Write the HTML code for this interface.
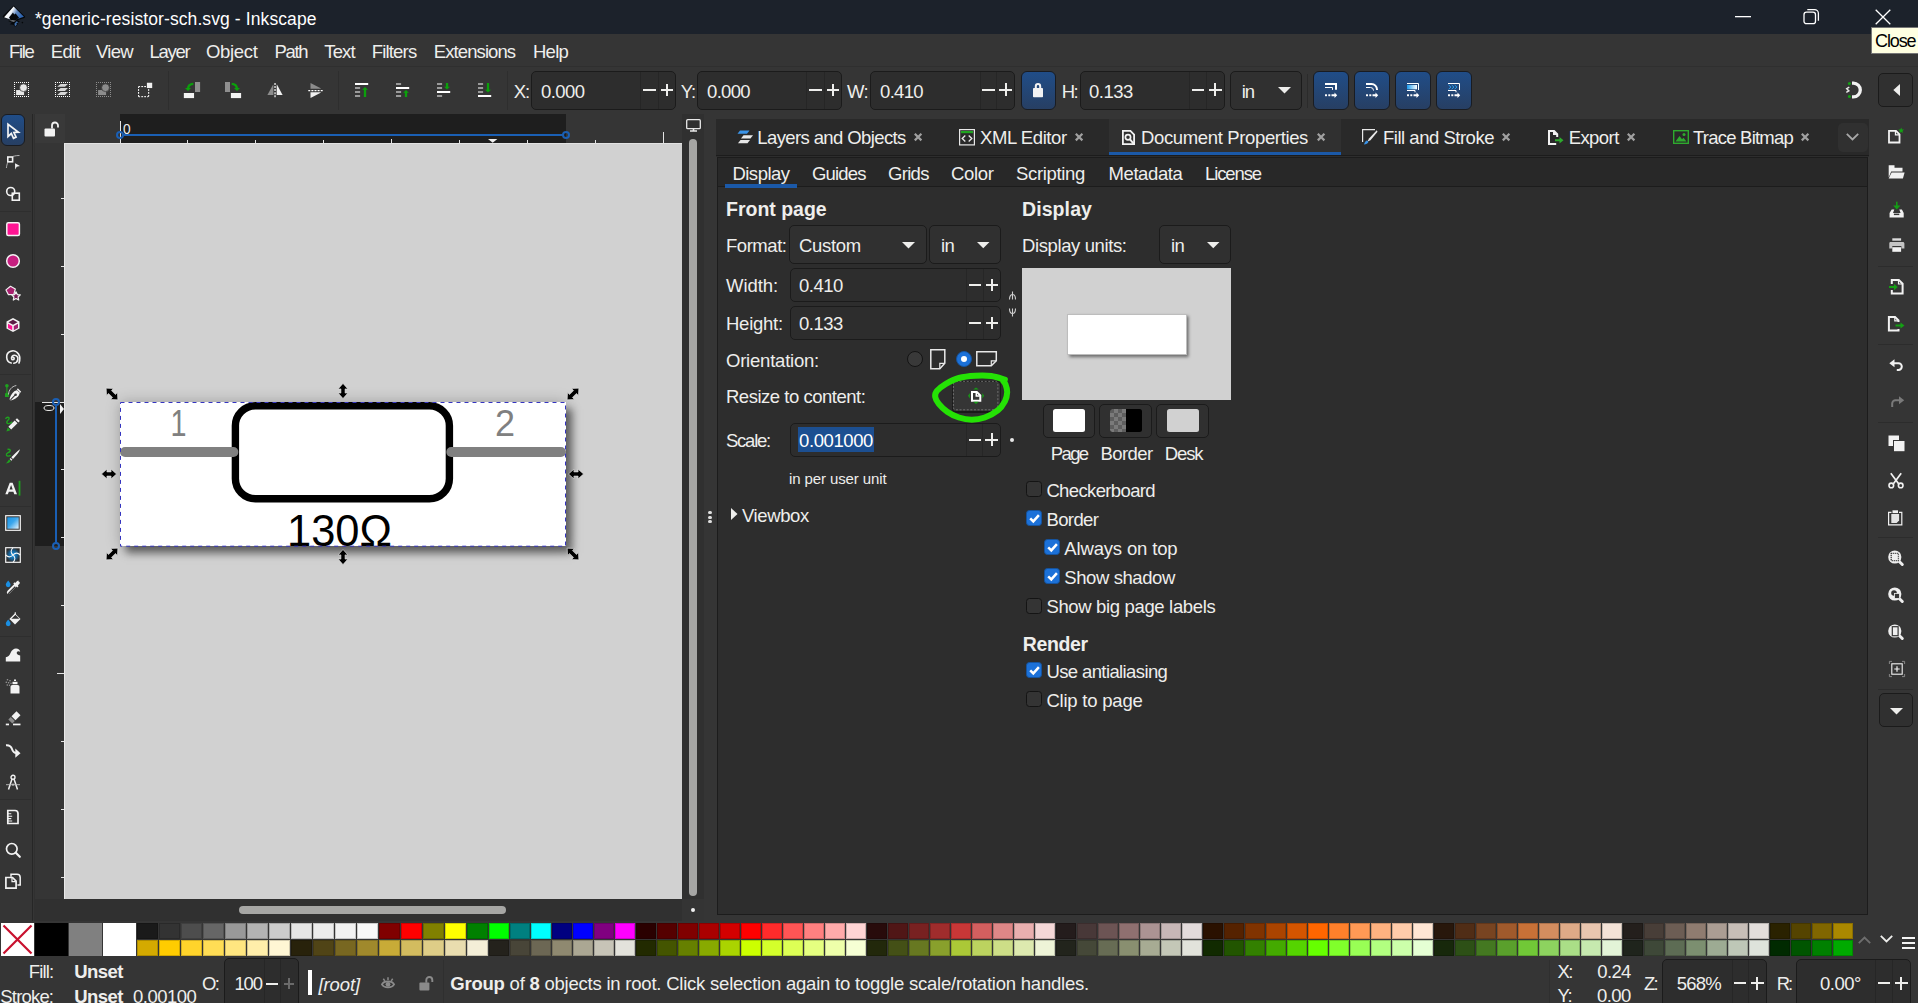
<!DOCTYPE html>
<html lang="en"><head><meta charset="utf-8"><title>*generic-resistor-sch.svg - Inkscape</title>
<style>
html,body{margin:0;padding:0;}
body{width:1918px;height:1003px;overflow:hidden;background:#353535;position:relative;font-family:"Liberation Sans",sans-serif;}
body div,body span.t,body svg{position:absolute;box-sizing:border-box;}
span.t{white-space:pre;}
svg{overflow:visible;}
</style></head><body>
<div style="left:0px;top:0px;width:1918px;height:34px;background:#1c222b;"></div>
<span class="t" style="left:34.90px;top:10.69px;font-size:17.5px;line-height:17.5px;color:#ffffff;letter-spacing:0.098px;">*generic-resistor-sch.svg - Inkscape</span>
<svg style="left:1735px;top:16px;" width="16" height="2" viewBox="0 0 16 2"><rect x="0" y="0" width="16" height="1.3" fill="#fff"/></svg>
<svg style="left:1803px;top:8px;" width="18" height="18" viewBox="0 0 18 18"><rect x="1" y="4.2" width="11.5" height="11.5" rx="2.5" fill="none" stroke="#fff" stroke-width="1.3"/><path d="M4.3 1.6h7.2a3.9 3.9 0 0 1 3.9 3.9v7.2" fill="none" stroke="#fff" stroke-width="1.3"/></svg>
<svg style="left:1875px;top:9px;" width="16" height="16" viewBox="0 0 16 16"><path d="M0.7 0.7L15.3 15.3M15.3 0.7L0.7 15.3" stroke="#fff" stroke-width="1.3" fill="none"/></svg>
<svg style="left:2px;top:4px;" width="25" height="25" viewBox="0 0 25 25"><defs><linearGradient id="lg1" x1="0" y1="0" x2="1" y2="0.350"><stop offset="0" stop-color="#ffffff"/><stop offset="0.450" stop-color="#f4f6fa"/><stop offset="0.700" stop-color="#5f86bd"/><stop offset="1" stop-color="#2f65b0"/></linearGradient></defs><path d="M11.600 1.500L22.800 12.300c.6.700.3 1.300-.5 1.600l-6.800 2.300 2.500 1.300-3 1.300 1 1-2.600 3.200-2.200-2.300-3.500-.5 2.300-1.500-3.800-1.600 2.300-1.400-7-2.200c-.9-.4-1-1-.4-1.700z" fill="#05070a"/><path d="M11.600 2.600l10.300 10.100-7.300 2.600c-1.500-1-4.800-1-6.300.2l-6.200-2.300z" fill="url(#lg1)"/><path d="M11 8.500l1.200 2 1.500-1 3.500 4.500-3 1.500c-1.500-.8-4-.8-5.500.2L7 13.500z" fill="#05070a"/><path d="M7.200 16.700c1.800-.7 5-.7 7 .1l-2.500.9z" fill="#8d9196"/><path d="M14.600 17.300l1.800.9-2 1 .6 1.100-1.900 2.200-.7-2.700z" fill="#3f6eaa"/><circle cx="20.400" cy="18.600" r="0.800" fill="#05070a"/></svg>
<span class="t" style="left:9.00px;top:42.74px;font-size:18.5px;line-height:18.5px;color:#eeeeec;letter-spacing:-1.353px;">File</span>
<span class="t" style="left:50.70px;top:42.74px;font-size:18.5px;line-height:18.5px;color:#eeeeec;letter-spacing:-0.645px;">Edit</span>
<span class="t" style="left:96.00px;top:42.74px;font-size:18.5px;line-height:18.5px;color:#eeeeec;letter-spacing:-0.742px;">View</span>
<span class="t" style="left:149.50px;top:42.74px;font-size:18.5px;line-height:18.5px;color:#eeeeec;letter-spacing:-1.256px;">Layer</span>
<span class="t" style="left:206.00px;top:42.74px;font-size:18.5px;line-height:18.5px;color:#eeeeec;letter-spacing:-0.311px;">Object</span>
<span class="t" style="left:274.60px;top:42.74px;font-size:18.5px;line-height:18.5px;color:#eeeeec;letter-spacing:-1.339px;">Path</span>
<span class="t" style="left:324.30px;top:42.74px;font-size:18.5px;line-height:18.5px;color:#eeeeec;letter-spacing:-0.882px;">Text</span>
<span class="t" style="left:371.70px;top:42.74px;font-size:18.5px;line-height:18.5px;color:#eeeeec;letter-spacing:-0.809px;">Filters</span>
<span class="t" style="left:433.80px;top:42.74px;font-size:18.5px;line-height:18.5px;color:#eeeeec;letter-spacing:-0.910px;">Extensions</span>
<span class="t" style="left:532.90px;top:42.74px;font-size:18.5px;line-height:18.5px;color:#eeeeec;letter-spacing:-0.687px;">Help</span>
<div style="left:0px;top:66px;width:1918px;height:1px;background:#2f2f2f;"></div>
<span class="t" style="left:513.80px;top:82.74px;font-size:18.5px;line-height:18.5px;color:#eeeeec;letter-spacing:-1.190px;">X:</span>
<div style="left:531px;top:71px;width:145px;height:38.5px;background:#2d2d2d;border:1px solid #1b1b1b;border-radius:5px;"></div>
<div style="left:640px;top:72px;width:1px;height:36.5px;background:#262626;"></div>
<div style="left:658px;top:72px;width:1px;height:36.5px;background:#262626;"></div>
<span class="t" style="left:541.00px;top:82.74px;font-size:18.5px;line-height:18.5px;color:#eeeeec;letter-spacing:-0.539px;">0.000</span>
<div style="left:643px;top:88.6px;width:13px;height:2px;background:#eeeeec;"></div>
<div style="left:661px;top:88.6px;width:12px;height:2px;background:#eeeeec;"></div>
<div style="left:666.0px;top:83.6px;width:2px;height:12px;background:#eeeeec;"></div>
<span class="t" style="left:680.70px;top:82.74px;font-size:18.5px;line-height:18.5px;color:#eeeeec;letter-spacing:-1.080px;">Y:</span>
<div style="left:697px;top:71px;width:145px;height:38.5px;background:#2d2d2d;border:1px solid #1b1b1b;border-radius:5px;"></div>
<div style="left:806px;top:72px;width:1px;height:36.5px;background:#262626;"></div>
<div style="left:824px;top:72px;width:1px;height:36.5px;background:#262626;"></div>
<span class="t" style="left:707.00px;top:82.74px;font-size:18.5px;line-height:18.5px;color:#eeeeec;letter-spacing:-0.659px;">0.000</span>
<div style="left:809px;top:88.6px;width:13px;height:2px;background:#eeeeec;"></div>
<div style="left:827px;top:88.6px;width:12px;height:2px;background:#eeeeec;"></div>
<div style="left:832.0px;top:83.6px;width:2px;height:12px;background:#eeeeec;"></div>
<span class="t" style="left:847.00px;top:82.74px;font-size:18.5px;line-height:18.5px;color:#eeeeec;letter-spacing:-0.633px;">W:</span>
<div style="left:870px;top:71px;width:145px;height:38.5px;background:#2d2d2d;border:1px solid #1b1b1b;border-radius:5px;"></div>
<div style="left:980px;top:72px;width:1px;height:36.5px;background:#262626;"></div>
<div style="left:996px;top:72px;width:1px;height:36.5px;background:#262626;"></div>
<span class="t" style="left:880.00px;top:82.74px;font-size:18.5px;line-height:18.5px;color:#eeeeec;letter-spacing:-0.659px;">0.410</span>
<div style="left:982px;top:88.6px;width:13px;height:2px;background:#eeeeec;"></div>
<div style="left:999px;top:88.6px;width:13px;height:2px;background:#eeeeec;"></div>
<div style="left:1004.5px;top:83.1px;width:2px;height:13px;background:#eeeeec;"></div>
<span class="t" style="left:1061.70px;top:82.74px;font-size:18.5px;line-height:18.5px;color:#eeeeec;letter-spacing:-1.600px;">H:</span>
<div style="left:1080px;top:71px;width:145px;height:38.5px;background:#2d2d2d;border:1px solid #1b1b1b;border-radius:5px;"></div>
<div style="left:1189px;top:72px;width:1px;height:36.5px;background:#262626;"></div>
<div style="left:1206px;top:72px;width:1px;height:36.5px;background:#262626;"></div>
<span class="t" style="left:1089.00px;top:82.74px;font-size:18.5px;line-height:18.5px;color:#eeeeec;letter-spacing:-0.519px;">0.133</span>
<div style="left:1191.7px;top:88.6px;width:12.299999999999955px;height:2px;background:#eeeeec;"></div>
<div style="left:1209px;top:88.6px;width:12.700000000000045px;height:2px;background:#eeeeec;"></div>
<div style="left:1214.3px;top:83.2px;width:2px;height:12.700000000000045px;background:#eeeeec;"></div>
<div style="left:1020.5px;top:71px;width:35px;height:38.5px;background:linear-gradient(#204d88,#273f63);border:1px solid #191c22;border-radius:6px;"></div>
<svg style="left:1033px;top:82px;" width="10" height="16" viewBox="0 0 10 16"><path d="M2.800 7V4.200a2.200 2.200 0 0 1 4.400 0V7" fill="none" stroke="#f2f2f2" stroke-width="2"/><rect x="0" y="6" width="10" height="9.300" rx="0.800" fill="#f2f2f2"/></svg>
<div style="left:1230px;top:71px;width:71.7px;height:38.5px;background:#303030;border:1px solid #1b1b1b;border-radius:5px;"></div>
<span class="t" style="left:1241.70px;top:82.74px;font-size:18.5px;line-height:18.5px;color:#eeeeec;letter-spacing:-1.050px;">in</span>
<svg style="left:1278px;top:87px;" width="13" height="7" viewBox="0 0 13 7"><path d="M0 0h13l-6.500 6.500z" fill="#eeeeec"/></svg>
<div style="left:1307px;top:74px;width:1px;height:34px;background:#2b2b2b;"></div>
<div style="left:1313.2px;top:71px;width:35.4px;height:38.5px;background:linear-gradient(#204d88,#273f63);border:1px solid #191c22;border-radius:6px;"></div>
<div style="left:1354.2px;top:71px;width:35.4px;height:38.5px;background:linear-gradient(#204d88,#273f63);border:1px solid #191c22;border-radius:6px;"></div>
<div style="left:1395.2px;top:71px;width:35.4px;height:38.5px;background:linear-gradient(#204d88,#273f63);border:1px solid #191c22;border-radius:6px;"></div>
<div style="left:1436.2px;top:71px;width:35.4px;height:38.5px;background:linear-gradient(#204d88,#273f63);border:1px solid #191c22;border-radius:6px;"></div>
<div style="left:1878px;top:73px;width:35px;height:34px;background:#303030;border:1px solid #1b1b1b;border-radius:5px;"></div>
<svg style="left:1892.5px;top:84px;" width="7" height="12" viewBox="0 0 7 12"><path d="M7 0v12l-6.700-6z" fill="#eeeeec"/></svg>
<div style="left:1871px;top:27px;width:47px;height:27px;background:#ffffe1;border:1px solid #767676;border-right:none;"></div>
<span class="t" style="left:1875.00px;top:32.26px;font-size:18px;line-height:18px;color:#000;letter-spacing:-1.104px;">Close</span>
<div style="left:32px;top:114px;width:1.4px;height:807px;background:#262626;"></div>
<div style="left:1px;top:114px;width:23.5px;height:31.5px;background:linear-gradient(#204d88,#273f63);border:1px solid #191c22;border-radius:6px;"></div>
<div style="left:33.5px;top:114px;width:670.5px;height:807px;background:#303030;"></div>
<div style="left:35px;top:114px;width:647px;height:29px;background:#353535;"></div>
<div style="left:120px;top:114px;width:446px;height:29px;background:#1e1e1e;"></div>
<div style="left:35px;top:143px;width:29px;height:756px;background:#353535;"></div>
<div style="left:35px;top:402px;width:29px;height:144px;background:#1e1e1e;"></div>
<div style="left:35px;top:114px;width:29.5px;height:29px;background:#393939;"></div>
<div style="left:64px;top:143px;width:618px;height:756px;background:#d1d1d1;border-left:1px solid #e9e9e9;border-top:1px solid #e2e2e2;"></div>
<div style="left:689px;top:139px;width:8.2px;height:757px;background:#a6a6a4;border-radius:4px;"></div>
<div style="left:682px;top:899px;width:22px;height:22px;background:#343434;"></div>
<div style="left:239px;top:906px;width:266.5px;height:8px;background:#a6a6a4;border-radius:4px;"></div>
<div style="left:690.8px;top:907.8px;width:4.4px;height:4.4px;background:#f0f0f0;border-radius:50%;"></div>
<div style="left:704px;top:114px;width:13px;height:802px;background:#353535;"></div>
<div style="left:716px;top:119px;width:1153px;height:38px;background:#2d2d2d;"></div>
<div style="left:716px;top:119px;width:1153px;height:36px;background:#292929;"></div>
<div style="left:1109px;top:119px;width:232px;height:36px;background:#303030;"></div>
<div style="left:1109px;top:152px;width:232px;height:4px;background:#1b59a8;"></div>
<div style="left:716px;top:155px;width:1153px;height:1px;background:#1c1c1c;"></div>
<div style="left:717px;top:157px;width:1151.3px;height:758px;background:#2d2d2d;border:1px solid #1c1c1c;"></div>
<div style="left:718px;top:158px;width:1149.3px;height:28px;background:#282828;"></div>
<span class="t" style="left:757.30px;top:129.34px;font-size:18.5px;line-height:18.5px;color:#eeeeec;letter-spacing:-0.611px;">Layers and Objects</span>
<svg style="left:913.9px;top:133.39999999999998px;" width="8.200000000000045" height="8.200000000000045" viewBox="0 0 8.200000000000045 8.200000000000045"><path d="M0.800 0.800L7.4 7.4M7.4 0.800L0.800 7.4" stroke="#a0a0a0" stroke-width="2.200" fill="none"/></svg>
<span class="t" style="left:980.00px;top:129.34px;font-size:18.5px;line-height:18.5px;color:#eeeeec;letter-spacing:-0.412px;">XML Editor</span>
<svg style="left:1074.7px;top:133.4000000000001px;" width="8.199999999999818" height="8.199999999999818" viewBox="0 0 8.199999999999818 8.199999999999818"><path d="M0.800 0.800L7.4 7.4M7.4 0.800L0.800 7.4" stroke="#a0a0a0" stroke-width="2.200" fill="none"/></svg>
<span class="t" style="left:1141.00px;top:129.34px;font-size:18.5px;line-height:18.5px;color:#eeeeec;letter-spacing:-0.357px;">Document Properties</span>
<svg style="left:1316.9px;top:133.4000000000001px;" width="8.199999999999818" height="8.199999999999818" viewBox="0 0 8.199999999999818 8.199999999999818"><path d="M0.800 0.800L7.4 7.4M7.4 0.800L0.800 7.4" stroke="#a0a0a0" stroke-width="2.200" fill="none"/></svg>
<span class="t" style="left:1383.00px;top:129.34px;font-size:18.5px;line-height:18.5px;color:#eeeeec;letter-spacing:-0.483px;">Fill and Stroke</span>
<svg style="left:1501.7px;top:133.4000000000001px;" width="8.199999999999818" height="8.199999999999818" viewBox="0 0 8.199999999999818 8.199999999999818"><path d="M0.800 0.800L7.4 7.4M7.4 0.800L0.800 7.4" stroke="#a0a0a0" stroke-width="2.200" fill="none"/></svg>
<span class="t" style="left:1568.70px;top:129.34px;font-size:18.5px;line-height:18.5px;color:#eeeeec;letter-spacing:-0.578px;">Export</span>
<svg style="left:1626.6000000000001px;top:133.4000000000001px;" width="8.199999999999818" height="8.199999999999818" viewBox="0 0 8.199999999999818 8.199999999999818"><path d="M0.800 0.800L7.4 7.4M7.4 0.800L0.800 7.4" stroke="#a0a0a0" stroke-width="2.200" fill="none"/></svg>
<span class="t" style="left:1693.00px;top:129.34px;font-size:18.5px;line-height:18.5px;color:#eeeeec;letter-spacing:-0.777px;">Trace Bitmap</span>
<svg style="left:1801.4px;top:133.4000000000001px;" width="8.199999999999818" height="8.199999999999818" viewBox="0 0 8.199999999999818 8.199999999999818"><path d="M0.800 0.800L7.4 7.4M7.4 0.800L0.800 7.4" stroke="#a0a0a0" stroke-width="2.200" fill="none"/></svg>
<div style="left:1838px;top:122.5px;width:30px;height:29.5px;background:#303030;border-radius:5px;"></div>
<svg style="left:1846px;top:133px;" width="13" height="8" viewBox="0 0 13 8"><path d="M0.800 0.800L6.500 6.500L12.200 0.800" stroke="#a8a8a8" stroke-width="1.800" fill="none"/></svg>
<svg style="left:737px;top:129px;" width="17" height="17" viewBox="0 0 17 17"><path d="M3 1.500h9.500l-2.500 3.200H0.500z" fill="#3b94e8"/><path d="M6.500 6.200h9.500l-2.500 3.200H4z" fill="#e8e8e8"/><path d="M3.500 11h9.500l-2.500 3.200H1z" fill="#e8e8e8"/></svg>
<svg style="left:959px;top:129px;" width="16" height="17" viewBox="0 0 16 17"><rect x="0.600" y="0.600" width="14.800" height="15.300" fill="none" stroke="#e8e8e8" stroke-width="1.200"/><rect x="2" y="2" width="12" height="2.200" fill="#1fa31f"/><path d="M6.300 6.500L3.200 9.500l3.100 3M9.700 6.500l3.100 3-3.100 3" fill="none" stroke="#e8e8e8" stroke-width="1.300"/></svg>
<svg style="left:1122px;top:130px;" width="13" height="15" viewBox="0 0 13 15"><path d="M0.900 0.900h7.500l3.700 3.700v9.500h-11.200z" fill="none" stroke="#f2f2f2" stroke-width="1.800"/><circle cx="6" cy="7.200" r="2.600" fill="none" stroke="#f2f2f2" stroke-width="1.700"/><path d="M7.800 9.200l4 4.600" stroke="#f2f2f2" stroke-width="2"/></svg>
<svg style="left:1362px;top:129px;" width="16" height="17" viewBox="0 0 16 17"><path d="M0.600 13V0.600h12.400" fill="none" stroke="#e8e8e8" stroke-width="1.200"/><path d="M14.800 1.200L7 9.500l-1.500 3 3-1.300 7-8.500z" fill="#e8e8e8"/><path d="M5.200 11.500c-1.500.2-2.600 1.600-3.200 4 2 0 3.800-.8 4.500-2.700z" fill="#3b94e8"/></svg>
<svg style="left:1547px;top:129px;" width="17" height="17" viewBox="0 0 17 17"><path d="M1 1h6.500l3.700 3.700V8h-2V6H6V3H3v11h6.200v2H1z" fill="#f2f2f2"/><path d="M8 10.200h4.500V8l4 3.200-4 3.200v-2.200H8z" fill="#2eaa2e"/></svg>
<svg style="left:1673px;top:130px;" width="16" height="14" viewBox="0 0 16 14"><rect x="0.700" y="0.700" width="14.600" height="12.600" fill="none" stroke="#2eaa2e" stroke-width="1.400"/><path d="M2.500 11.500l4-5.500 2.500 3.200 1.500-1.500 3 3.800z" fill="#2eaa2e"/><circle cx="11" cy="4.500" r="1.500" fill="#2eaa2e"/></svg>
<span class="t" style="left:732.40px;top:164.84px;font-size:18.5px;line-height:18.5px;color:#eeeeec;letter-spacing:-0.494px;">Display</span>
<span class="t" style="left:812.00px;top:164.84px;font-size:18.5px;line-height:18.5px;color:#eeeeec;letter-spacing:-0.836px;">Guides</span>
<span class="t" style="left:888.00px;top:164.84px;font-size:18.5px;line-height:18.5px;color:#eeeeec;letter-spacing:-0.700px;">Grids</span>
<span class="t" style="left:951.00px;top:164.84px;font-size:18.5px;line-height:18.5px;color:#eeeeec;letter-spacing:-0.322px;">Color</span>
<span class="t" style="left:1016.00px;top:164.84px;font-size:18.5px;line-height:18.5px;color:#eeeeec;letter-spacing:-0.331px;">Scripting</span>
<span class="t" style="left:1108.50px;top:164.84px;font-size:18.5px;line-height:18.5px;color:#eeeeec;letter-spacing:-0.405px;">Metadata</span>
<span class="t" style="left:1205.00px;top:164.84px;font-size:18.5px;line-height:18.5px;color:#eeeeec;letter-spacing:-1.110px;">License</span>
<div style="left:718px;top:186px;width:1149.3px;height:1px;background:#1c1c1c;"></div>
<div style="left:725px;top:183.5px;width:72px;height:4px;background:#1b59a8;"></div>
<span class="t" style="left:726.00px;top:200.09px;font-size:19.5px;line-height:19.5px;color:#eeeeec;letter-spacing:-0.005px;font-weight:bold;">Front page</span>
<span class="t" style="left:1022.00px;top:200.09px;font-size:19.5px;line-height:19.5px;color:#eeeeec;letter-spacing:0.091px;font-weight:bold;">Display</span>
<span class="t" style="left:726.00px;top:236.64px;font-size:18.5px;line-height:18.5px;color:#eeeeec;letter-spacing:-0.462px;">Format:</span>
<div style="left:789.3px;top:225.3px;width:137.7px;height:38.4px;background:#303030;border:1px solid #1b1b1b;border-radius:5px;"></div>
<span class="t" style="left:799.00px;top:237.24px;font-size:18.5px;line-height:18.5px;color:#eeeeec;letter-spacing:-0.340px;">Custom</span>
<svg style="left:902px;top:241.9px;" width="13" height="6.5" viewBox="0 0 13 6.5"><path d="M0 0h13l-6.5 6.5z" fill="#eeeeec"/></svg>
<div style="left:929.3px;top:225.3px;width:71.7px;height:38.4px;background:#303030;border:1px solid #1b1b1b;border-radius:5px;"></div>
<span class="t" style="left:941.00px;top:237.24px;font-size:18.5px;line-height:18.5px;color:#eeeeec;letter-spacing:-0.700px;">in</span>
<svg style="left:977px;top:241.9px;" width="12.5" height="6.25" viewBox="0 0 12.5 6.25"><path d="M0 0h12.5l-6.25 6.25z" fill="#eeeeec"/></svg>
<span class="t" style="left:1022.00px;top:237.24px;font-size:18.5px;line-height:18.5px;color:#eeeeec;letter-spacing:-0.394px;">Display units:</span>
<div style="left:1159.3px;top:225.3px;width:71.7px;height:38.4px;background:#303030;border:1px solid #1b1b1b;border-radius:5px;"></div>
<span class="t" style="left:1171.00px;top:237.24px;font-size:18.5px;line-height:18.5px;color:#eeeeec;letter-spacing:-0.700px;">in</span>
<svg style="left:1207px;top:241.9px;" width="12.5" height="6.25" viewBox="0 0 12.5 6.25"><path d="M0 0h12.5l-6.25 6.25z" fill="#eeeeec"/></svg>
<span class="t" style="left:726.00px;top:276.64px;font-size:18.5px;line-height:18.5px;color:#eeeeec;letter-spacing:-0.071px;">Width:</span>
<div style="left:790px;top:267.7px;width:211px;height:34.10000000000002px;background:#2d2d2d;border:1px solid #1b1b1b;border-radius:5px;"></div>
<div style="left:966px;top:268.7px;width:1px;height:32.10000000000002px;background:#262626;"></div>
<div style="left:983px;top:268.7px;width:1px;height:32.10000000000002px;background:#262626;"></div>
<span class="t" style="left:799.00px;top:276.64px;font-size:18.5px;line-height:18.5px;color:#eeeeec;letter-spacing:-0.499px;">0.410</span>
<div style="left:969px;top:283.8px;width:11.600000000000023px;height:2px;background:#eeeeec;"></div>
<div style="left:986px;top:283.8px;width:12px;height:2px;background:#eeeeec;"></div>
<div style="left:991.0px;top:278.8px;width:2px;height:12px;background:#eeeeec;"></div>
<span class="t" style="left:726.00px;top:314.64px;font-size:18.5px;line-height:18.5px;color:#eeeeec;letter-spacing:-0.260px;">Height:</span>
<div style="left:790px;top:306px;width:211px;height:34px;background:#2d2d2d;border:1px solid #1b1b1b;border-radius:5px;"></div>
<div style="left:966px;top:307px;width:1px;height:32px;background:#262626;"></div>
<div style="left:983px;top:307px;width:1px;height:32px;background:#262626;"></div>
<span class="t" style="left:799.00px;top:314.64px;font-size:18.5px;line-height:18.5px;color:#eeeeec;letter-spacing:-0.499px;">0.133</span>
<div style="left:969px;top:321.8px;width:11.600000000000023px;height:2px;background:#eeeeec;"></div>
<div style="left:986px;top:321.8px;width:12px;height:2px;background:#eeeeec;"></div>
<div style="left:991.0px;top:316.8px;width:2px;height:12px;background:#eeeeec;"></div>
<span class="t" style="left:726.00px;top:352.34px;font-size:18.5px;line-height:18.5px;color:#eeeeec;letter-spacing:-0.220px;">Orientation:</span>
<span class="t" style="left:726.00px;top:388.34px;font-size:18.5px;line-height:18.5px;color:#eeeeec;letter-spacing:-0.488px;">Resize to content:</span>
<span class="t" style="left:726.00px;top:432.34px;font-size:18.5px;line-height:18.5px;color:#eeeeec;letter-spacing:-1.236px;">Scale:</span>
<div style="left:789.5px;top:423px;width:211.5px;height:33.69999999999999px;background:#2d2d2d;border:1px solid #1b1b1b;border-radius:5px;"></div>
<div style="left:966px;top:424px;width:1px;height:31.69999999999999px;background:#262626;"></div>
<div style="left:982px;top:424px;width:1px;height:31.69999999999999px;background:#262626;"></div>
<span class="t" style="left:799.00px;top:431.34px;font-size:18.5px;line-height:18.5px;color:#eeeeec;letter-spacing:74.000px;"></span>
<div style="left:968.5px;top:438.5px;width:12.5px;height:2px;background:#eeeeec;"></div>
<div style="left:985px;top:438.5px;width:13px;height:2px;background:#eeeeec;"></div>
<div style="left:990.5px;top:433.0px;width:2px;height:13px;background:#eeeeec;"></div>
<div style="left:798px;top:427.4px;width:76px;height:24.4px;background:#1c4f91;"></div>
<span class="t" style="left:799.00px;top:432.34px;font-size:18.5px;line-height:18.5px;color:#ffffff;letter-spacing:-0.395px;">0.001000</span>
<div style="left:1010.3px;top:438px;width:4px;height:4px;background:#e8e8e8;border-radius:50%;"></div>
<span class="t" style="left:789.00px;top:471.30px;font-size:15px;line-height:15px;color:#eeeeec;letter-spacing:-0.101px;">in per user unit</span>
<div style="left:708.4px;top:511px;width:3.2px;height:3.2px;background:#e0e0e0;border-radius:50%;"></div>
<div style="left:708.4px;top:515.5px;width:3.2px;height:3.2px;background:#e0e0e0;border-radius:50%;"></div>
<div style="left:708.4px;top:520px;width:3.2px;height:3.2px;background:#e0e0e0;border-radius:50%;"></div>
<svg style="left:730.5px;top:508px;" width="7" height="12" viewBox="0 0 7 12"><path d="M0 0l6.500 6L0 12z" fill="#eeeeec"/></svg>
<span class="t" style="left:742.00px;top:507.14px;font-size:18.5px;line-height:18.5px;color:#eeeeec;letter-spacing:-0.399px;">Viewbox</span>
<svg style="left:1008px;top:291px;" width="9" height="26" viewBox="0 0 9 26"><path d="M4.500 0.500v8M1.500 8.500c0-3.500 1.500-5 3-5s3 1.500 3 5" fill="none" stroke="#cfcfcf" stroke-width="1.100"/><path d="M4.500 25.500v-8M1.500 17.500c0 3.500 1.500 5 3 5s3-1.500 3-5" fill="none" stroke="#cfcfcf" stroke-width="1.100"/></svg>
<div style="left:907px;top:351px;width:16px;height:16px;background:#393939;border:1px solid #141414;border-radius:50%;"></div>
<div style="left:956px;top:351px;width:16px;height:16px;background:#1c71d8;border:1px solid #15539e;border-radius:50%;"></div>
<div style="left:960.7px;top:355.7px;width:6.6px;height:6.6px;background:#ffffff;border-radius:50%;"></div>
<svg style="left:929.5px;top:349px;" width="16" height="21" viewBox="0 0 16 21"><path d="M0.800 0.800h14v13.500l-5 5.500h-9z" fill="none" stroke="#e8e8e8" stroke-width="1.500"/><path d="M14.800 14.300h-5v5.500" fill="none" stroke="#e8e8e8" stroke-width="1.200"/></svg>
<svg style="left:976px;top:351px;" width="21" height="16" viewBox="0 0 21 16"><path d="M0.800 0.800h19.500v9l-5 5h-14.500z" fill="none" stroke="#e8e8e8" stroke-width="1.500"/><path d="M20.300 9.800h-5v5" fill="none" stroke="#e8e8e8" stroke-width="1.200"/></svg>
<div style="left:952px;top:380.5px;width:48.7px;height:32px;background:#353535;border:1px solid #1b1b1b;border-bottom:2px solid #191919;border-radius:4px;"></div>
<svg style="left:953.4px;top:381.2px;" width="45.3" height="29.2" viewBox="0 0 45.3 29.2"><rect x="0.400" y="0.400" width="44.500" height="28.400" rx="2.500" fill="none" stroke="#909090" stroke-width="0.650" stroke-dasharray="2 1.600"/></svg>
<svg style="left:970.9px;top:390.6px;" width="10.3" height="10.7" viewBox="0 0 10.3 10.7"><path d="M1 1h4.800l3.500 3.500V9.700H1z" fill="none" stroke="#ffffff" stroke-width="2"/><path d="M5.300 1.500v3.500h3.500" fill="none" stroke="#ffffff" stroke-width="1.500"/></svg>
<svg style="left:967px;top:387px;" width="18" height="18" viewBox="0 0 18 18"><path d="M9 0.400l2.800 2.200h-5.600zM9 17l2.800-2.200h-5.600zM1 8.700l1.900-2.800v5.600zM17.200 8.700l-1.900-2.800v5.600z" fill="#179a17"/></svg>
<svg style="left:928px;top:370px;" width="86" height="56" viewBox="0 0 86 56"><path d="M76.9 9.6C74.6 9.0 68.3 6.7 63.3 6.0C58.3 5.3 52.5 5.4 47.1 5.7C41.7 6.0 35.8 6.6 30.9 8.0C26.0 9.3 21.6 11.7 17.9 13.8C14.2 16.0 10.7 18.7 8.9 20.9C7.1 23.1 6.9 24.6 7.2 26.8C7.5 29.0 8.8 31.4 10.8 33.9C12.8 36.4 15.8 39.4 19.2 41.7C22.5 44.0 26.8 46.1 30.9 47.5C35.0 48.9 39.5 49.8 43.8 49.8C48.1 49.8 52.5 49.1 56.8 47.5C61.1 45.9 66.4 43.1 69.8 40.4C73.2 37.7 75.3 34.3 76.9 31.3C78.5 28.3 79.1 25.0 79.2 22.2C79.3 19.4 78.2 16.2 77.5 14.4C76.8 12.6 75.7 11.7 75.3 11.2" fill="none" stroke="#25e205" stroke-width="6" stroke-linecap="round" stroke-linejoin="round"/></svg>
<div style="left:1022px;top:268px;width:209px;height:132px;background:#d1d1d1;"></div>
<div style="left:1066.5px;top:314px;width:120.5px;height:40.5px;background:#ffffff;box-shadow:1.500px 2px 3px rgba(0,0,0,.5);border:1px solid #bdbdbd;"></div>
<div style="left:1042.8px;top:404.3px;width:51.9px;height:33.4px;background:#303030;border:1px solid #1b1b1b;border-radius:5px;"></div>
<div style="left:1099.3px;top:404.3px;width:52.4px;height:33.4px;background:#303030;border:1px solid #1b1b1b;border-radius:5px;"></div>
<div style="left:1156.3px;top:404.3px;width:52.4px;height:33.4px;background:#303030;border:1px solid #1b1b1b;border-radius:5px;"></div>
<div style="left:1052.8px;top:409.2px;width:32.4px;height:22.8px;background:#ffffff;border-radius:2.500px;"></div>
<div style="left:1110px;top:409.2px;width:32px;height:22.8px;background:#000000;border-radius:2.500px;"></div>
<div style="left:1110px;top:409.2px;width:16px;height:22.8px;background:#6e6e6e;border-radius:2.500px 0 0 2.500px;background:repeating-conic-gradient(#7a7a7a 0% 25%, #5e5e5e 0% 50%) 0 0/8px 8px;"></div>
<div style="left:1166.6px;top:409.2px;width:32.4px;height:22.8px;background:#d1d1d1;border-radius:2.500px;"></div>
<span class="t" style="left:1050.70px;top:445.04px;font-size:18.5px;line-height:18.5px;color:#eeeeec;letter-spacing:-1.577px;">Page</span>
<span class="t" style="left:1100.60px;top:445.04px;font-size:18.5px;line-height:18.5px;color:#eeeeec;letter-spacing:-0.588px;">Border</span>
<span class="t" style="left:1164.80px;top:445.04px;font-size:18.5px;line-height:18.5px;color:#eeeeec;letter-spacing:-1.112px;">Desk</span>
<div style="left:1026px;top:480.5px;width:16px;height:16px;background:#343434;border:1px solid #141414;border-radius:3.500px;"></div>
<span class="t" style="left:1046.40px;top:481.74px;font-size:18.5px;line-height:18.5px;color:#eeeeec;letter-spacing:-0.634px;">Checkerboard</span>
<div style="left:1026px;top:510.0px;width:16px;height:16px;background:#1c71d8;border:1px solid #15539e;border-radius:3.500px;"></div>
<svg style="left:1028.5px;top:513.5px;" width="11" height="9" viewBox="0 0 11 9"><path d="M1.200 4.300l3.100 3.100 5.600-6.200" fill="none" stroke="#fff" stroke-width="2.500"/></svg>
<span class="t" style="left:1046.40px;top:511.34px;font-size:18.5px;line-height:18.5px;color:#eeeeec;letter-spacing:-0.588px;">Border</span>
<div style="left:1044px;top:539.3px;width:16px;height:16px;background:#1c71d8;border:1px solid #15539e;border-radius:3.500px;"></div>
<svg style="left:1046.5px;top:542.8px;" width="11" height="9" viewBox="0 0 11 9"><path d="M1.200 4.300l3.100 3.100 5.600-6.200" fill="none" stroke="#fff" stroke-width="2.500"/></svg>
<span class="t" style="left:1064.30px;top:539.94px;font-size:18.5px;line-height:18.5px;color:#eeeeec;letter-spacing:-0.160px;">Always on top</span>
<div style="left:1044px;top:568.0px;width:16px;height:16px;background:#1c71d8;border:1px solid #15539e;border-radius:3.500px;"></div>
<svg style="left:1046.5px;top:571.5px;" width="11" height="9" viewBox="0 0 11 9"><path d="M1.200 4.300l3.100 3.100 5.600-6.200" fill="none" stroke="#fff" stroke-width="2.500"/></svg>
<span class="t" style="left:1064.30px;top:568.64px;font-size:18.5px;line-height:18.5px;color:#eeeeec;letter-spacing:-0.417px;">Show shadow</span>
<div style="left:1026px;top:597.5px;width:16px;height:16px;background:#343434;border:1px solid #141414;border-radius:3.500px;"></div>
<span class="t" style="left:1046.40px;top:597.74px;font-size:18.5px;line-height:18.5px;color:#eeeeec;letter-spacing:-0.344px;">Show big page labels</span>
<span class="t" style="left:1022.70px;top:635.49px;font-size:19.5px;line-height:19.5px;color:#eeeeec;letter-spacing:-0.364px;font-weight:bold;">Render</span>
<div style="left:1026px;top:662.0px;width:16px;height:16px;background:#1c71d8;border:1px solid #15539e;border-radius:3.500px;"></div>
<svg style="left:1028.5px;top:665.5px;" width="11" height="9" viewBox="0 0 11 9"><path d="M1.200 4.300l3.100 3.100 5.600-6.200" fill="none" stroke="#fff" stroke-width="2.500"/></svg>
<span class="t" style="left:1046.40px;top:663.04px;font-size:18.5px;line-height:18.5px;color:#eeeeec;letter-spacing:-0.607px;">Use antialiasing</span>
<div style="left:1026px;top:690.5px;width:16px;height:16px;background:#343434;border:1px solid #141414;border-radius:3.500px;"></div>
<span class="t" style="left:1046.40px;top:691.74px;font-size:18.5px;line-height:18.5px;color:#eeeeec;letter-spacing:-0.211px;">Clip to page</span>
<div style="left:137px;top:923px;width:21px;height:16px;background:#1a1a1a;box-shadow:inset 0 0 0 1px rgba(0,0,0,.18);"></div>
<div style="left:159px;top:923px;width:21px;height:16px;background:#333333;box-shadow:inset 0 0 0 1px rgba(0,0,0,.18);"></div>
<div style="left:181px;top:923px;width:21px;height:16px;background:#4d4d4d;box-shadow:inset 0 0 0 1px rgba(0,0,0,.18);"></div>
<div style="left:203px;top:923px;width:21px;height:16px;background:#666666;box-shadow:inset 0 0 0 1px rgba(0,0,0,.18);"></div>
<div style="left:225px;top:923px;width:21px;height:16px;background:#999999;box-shadow:inset 0 0 0 1px rgba(0,0,0,.18);"></div>
<div style="left:247px;top:923px;width:21px;height:16px;background:#b3b3b3;box-shadow:inset 0 0 0 1px rgba(0,0,0,.18);"></div>
<div style="left:269px;top:923px;width:21px;height:16px;background:#cccccc;box-shadow:inset 0 0 0 1px rgba(0,0,0,.18);"></div>
<div style="left:291px;top:923px;width:21px;height:16px;background:#e6e6e6;box-shadow:inset 0 0 0 1px rgba(0,0,0,.18);"></div>
<div style="left:313px;top:923px;width:21px;height:16px;background:#ececec;box-shadow:inset 0 0 0 1px rgba(0,0,0,.18);"></div>
<div style="left:335px;top:923px;width:21px;height:16px;background:#f2f2f2;box-shadow:inset 0 0 0 1px rgba(0,0,0,.18);"></div>
<div style="left:357px;top:923px;width:21px;height:16px;background:#f9f9f9;box-shadow:inset 0 0 0 1px rgba(0,0,0,.18);"></div>
<div style="left:379px;top:923px;width:21px;height:16px;background:#800000;box-shadow:inset 0 0 0 1px rgba(0,0,0,.18);"></div>
<div style="left:401px;top:923px;width:21px;height:16px;background:#ff0000;box-shadow:inset 0 0 0 1px rgba(0,0,0,.18);"></div>
<div style="left:423px;top:923px;width:21px;height:16px;background:#808000;box-shadow:inset 0 0 0 1px rgba(0,0,0,.18);"></div>
<div style="left:445px;top:923px;width:21px;height:16px;background:#ffff00;box-shadow:inset 0 0 0 1px rgba(0,0,0,.18);"></div>
<div style="left:467px;top:923px;width:21px;height:16px;background:#008000;box-shadow:inset 0 0 0 1px rgba(0,0,0,.18);"></div>
<div style="left:489px;top:923px;width:20px;height:16px;background:#00ff00;box-shadow:inset 0 0 0 1px rgba(0,0,0,.18);"></div>
<div style="left:510px;top:923px;width:20px;height:16px;background:#008080;box-shadow:inset 0 0 0 1px rgba(0,0,0,.18);"></div>
<div style="left:531px;top:923px;width:20px;height:16px;background:#00ffff;box-shadow:inset 0 0 0 1px rgba(0,0,0,.18);"></div>
<div style="left:552px;top:923px;width:20px;height:16px;background:#000080;box-shadow:inset 0 0 0 1px rgba(0,0,0,.18);"></div>
<div style="left:573px;top:923px;width:20px;height:16px;background:#0000ff;box-shadow:inset 0 0 0 1px rgba(0,0,0,.18);"></div>
<div style="left:594px;top:923px;width:20px;height:16px;background:#800080;box-shadow:inset 0 0 0 1px rgba(0,0,0,.18);"></div>
<div style="left:615px;top:923px;width:20px;height:16px;background:#ff00ff;box-shadow:inset 0 0 0 1px rgba(0,0,0,.18);"></div>
<div style="left:636px;top:923px;width:20px;height:16px;background:#2a0000;box-shadow:inset 0 0 0 1px rgba(0,0,0,.18);"></div>
<div style="left:657px;top:923px;width:20px;height:16px;background:#550000;box-shadow:inset 0 0 0 1px rgba(0,0,0,.18);"></div>
<div style="left:678px;top:923px;width:20px;height:16px;background:#800000;box-shadow:inset 0 0 0 1px rgba(0,0,0,.18);"></div>
<div style="left:699px;top:923px;width:20px;height:16px;background:#aa0000;box-shadow:inset 0 0 0 1px rgba(0,0,0,.18);"></div>
<div style="left:720px;top:923px;width:20px;height:16px;background:#d40000;box-shadow:inset 0 0 0 1px rgba(0,0,0,.18);"></div>
<div style="left:741px;top:923px;width:20px;height:16px;background:#ff0000;box-shadow:inset 0 0 0 1px rgba(0,0,0,.18);"></div>
<div style="left:762px;top:923px;width:20px;height:16px;background:#ff2b2b;box-shadow:inset 0 0 0 1px rgba(0,0,0,.18);"></div>
<div style="left:783px;top:923px;width:20px;height:16px;background:#ff5555;box-shadow:inset 0 0 0 1px rgba(0,0,0,.18);"></div>
<div style="left:804px;top:923px;width:20px;height:16px;background:#ff8080;box-shadow:inset 0 0 0 1px rgba(0,0,0,.18);"></div>
<div style="left:825px;top:923px;width:20px;height:16px;background:#ffaaaa;box-shadow:inset 0 0 0 1px rgba(0,0,0,.18);"></div>
<div style="left:846px;top:923px;width:20px;height:16px;background:#ffd4d4;box-shadow:inset 0 0 0 1px rgba(0,0,0,.18);"></div>
<div style="left:867px;top:923px;width:20px;height:16px;background:#280b0b;box-shadow:inset 0 0 0 1px rgba(0,0,0,.18);"></div>
<div style="left:888px;top:923px;width:20px;height:16px;background:#501616;box-shadow:inset 0 0 0 1px rgba(0,0,0,.18);"></div>
<div style="left:909px;top:923px;width:20px;height:16px;background:#782121;box-shadow:inset 0 0 0 1px rgba(0,0,0,.18);"></div>
<div style="left:930px;top:923px;width:20px;height:16px;background:#a02c2c;box-shadow:inset 0 0 0 1px rgba(0,0,0,.18);"></div>
<div style="left:951px;top:923px;width:20px;height:16px;background:#c83737;box-shadow:inset 0 0 0 1px rgba(0,0,0,.18);"></div>
<div style="left:972px;top:923px;width:20px;height:16px;background:#d35f5f;box-shadow:inset 0 0 0 1px rgba(0,0,0,.18);"></div>
<div style="left:993px;top:923px;width:20px;height:16px;background:#de8787;box-shadow:inset 0 0 0 1px rgba(0,0,0,.18);"></div>
<div style="left:1014px;top:923px;width:20px;height:16px;background:#e9afaf;box-shadow:inset 0 0 0 1px rgba(0,0,0,.18);"></div>
<div style="left:1035px;top:923px;width:20px;height:16px;background:#f4d7d7;box-shadow:inset 0 0 0 1px rgba(0,0,0,.18);"></div>
<div style="left:1056px;top:923px;width:20px;height:16px;background:#241c1c;box-shadow:inset 0 0 0 1px rgba(0,0,0,.18);"></div>
<div style="left:1077px;top:923px;width:20px;height:16px;background:#483838;box-shadow:inset 0 0 0 1px rgba(0,0,0,.18);"></div>
<div style="left:1098px;top:923px;width:20px;height:16px;background:#6c5454;box-shadow:inset 0 0 0 1px rgba(0,0,0,.18);"></div>
<div style="left:1119px;top:923px;width:20px;height:16px;background:#8f7070;box-shadow:inset 0 0 0 1px rgba(0,0,0,.18);"></div>
<div style="left:1140px;top:923px;width:20px;height:16px;background:#ab9393;box-shadow:inset 0 0 0 1px rgba(0,0,0,.18);"></div>
<div style="left:1161px;top:923px;width:20px;height:16px;background:#c7b7b7;box-shadow:inset 0 0 0 1px rgba(0,0,0,.18);"></div>
<div style="left:1182px;top:923px;width:20px;height:16px;background:#e3dbdb;box-shadow:inset 0 0 0 1px rgba(0,0,0,.18);"></div>
<div style="left:1203px;top:923px;width:20px;height:16px;background:#2a1100;box-shadow:inset 0 0 0 1px rgba(0,0,0,.18);"></div>
<div style="left:1224px;top:923px;width:20px;height:16px;background:#552200;box-shadow:inset 0 0 0 1px rgba(0,0,0,.18);"></div>
<div style="left:1245px;top:923px;width:20px;height:16px;background:#803300;box-shadow:inset 0 0 0 1px rgba(0,0,0,.18);"></div>
<div style="left:1266px;top:923px;width:20px;height:16px;background:#aa4400;box-shadow:inset 0 0 0 1px rgba(0,0,0,.18);"></div>
<div style="left:1287px;top:923px;width:20px;height:16px;background:#d45500;box-shadow:inset 0 0 0 1px rgba(0,0,0,.18);"></div>
<div style="left:1308px;top:923px;width:20px;height:16px;background:#ff6600;box-shadow:inset 0 0 0 1px rgba(0,0,0,.18);"></div>
<div style="left:1329px;top:923px;width:20px;height:16px;background:#ff802b;box-shadow:inset 0 0 0 1px rgba(0,0,0,.18);"></div>
<div style="left:1350px;top:923px;width:20px;height:16px;background:#ff9955;box-shadow:inset 0 0 0 1px rgba(0,0,0,.18);"></div>
<div style="left:1371px;top:923px;width:20px;height:16px;background:#ffb280;box-shadow:inset 0 0 0 1px rgba(0,0,0,.18);"></div>
<div style="left:1392px;top:923px;width:20px;height:16px;background:#ffccaa;box-shadow:inset 0 0 0 1px rgba(0,0,0,.18);"></div>
<div style="left:1413px;top:923px;width:20px;height:16px;background:#ffe6d4;box-shadow:inset 0 0 0 1px rgba(0,0,0,.18);"></div>
<div style="left:1434px;top:923px;width:20px;height:16px;background:#28170b;box-shadow:inset 0 0 0 1px rgba(0,0,0,.18);"></div>
<div style="left:1455px;top:923px;width:20px;height:16px;background:#502d16;box-shadow:inset 0 0 0 1px rgba(0,0,0,.18);"></div>
<div style="left:1476px;top:923px;width:20px;height:16px;background:#784421;box-shadow:inset 0 0 0 1px rgba(0,0,0,.18);"></div>
<div style="left:1497px;top:923px;width:20px;height:16px;background:#a05a2c;box-shadow:inset 0 0 0 1px rgba(0,0,0,.18);"></div>
<div style="left:1518px;top:923px;width:20px;height:16px;background:#c87137;box-shadow:inset 0 0 0 1px rgba(0,0,0,.18);"></div>
<div style="left:1539px;top:923px;width:20px;height:16px;background:#d38d5f;box-shadow:inset 0 0 0 1px rgba(0,0,0,.18);"></div>
<div style="left:1560px;top:923px;width:20px;height:16px;background:#deaa87;box-shadow:inset 0 0 0 1px rgba(0,0,0,.18);"></div>
<div style="left:1581px;top:923px;width:20px;height:16px;background:#e9c6af;box-shadow:inset 0 0 0 1px rgba(0,0,0,.18);"></div>
<div style="left:1602px;top:923px;width:20px;height:16px;background:#f4e3d7;box-shadow:inset 0 0 0 1px rgba(0,0,0,.18);"></div>
<div style="left:1623px;top:923px;width:20px;height:16px;background:#241f1c;box-shadow:inset 0 0 0 1px rgba(0,0,0,.18);"></div>
<div style="left:1644px;top:923px;width:20px;height:16px;background:#483e38;box-shadow:inset 0 0 0 1px rgba(0,0,0,.18);"></div>
<div style="left:1665px;top:923px;width:20px;height:16px;background:#6c5d54;box-shadow:inset 0 0 0 1px rgba(0,0,0,.18);"></div>
<div style="left:1686px;top:923px;width:20px;height:16px;background:#8f7c70;box-shadow:inset 0 0 0 1px rgba(0,0,0,.18);"></div>
<div style="left:1707px;top:923px;width:20px;height:16px;background:#ab9d93;box-shadow:inset 0 0 0 1px rgba(0,0,0,.18);"></div>
<div style="left:1728px;top:923px;width:20px;height:16px;background:#c7beb7;box-shadow:inset 0 0 0 1px rgba(0,0,0,.18);"></div>
<div style="left:1749px;top:923px;width:20px;height:16px;background:#e3dedb;box-shadow:inset 0 0 0 1px rgba(0,0,0,.18);"></div>
<div style="left:1770px;top:923px;width:20px;height:16px;background:#2a2200;box-shadow:inset 0 0 0 1px rgba(0,0,0,.18);"></div>
<div style="left:1791px;top:923px;width:20px;height:16px;background:#554400;box-shadow:inset 0 0 0 1px rgba(0,0,0,.18);"></div>
<div style="left:1812px;top:923px;width:20px;height:16px;background:#806600;box-shadow:inset 0 0 0 1px rgba(0,0,0,.18);"></div>
<div style="left:1833px;top:923px;width:20px;height:16px;background:#aa8800;box-shadow:inset 0 0 0 1px rgba(0,0,0,.18);"></div>
<div style="left:137px;top:940px;width:21px;height:16px;background:#d4aa00;box-shadow:inset 0 0 0 1px rgba(0,0,0,.18);"></div>
<div style="left:159px;top:940px;width:21px;height:16px;background:#ffcc00;box-shadow:inset 0 0 0 1px rgba(0,0,0,.18);"></div>
<div style="left:181px;top:940px;width:21px;height:16px;background:#ffd42b;box-shadow:inset 0 0 0 1px rgba(0,0,0,.18);"></div>
<div style="left:203px;top:940px;width:21px;height:16px;background:#ffdd55;box-shadow:inset 0 0 0 1px rgba(0,0,0,.18);"></div>
<div style="left:225px;top:940px;width:21px;height:16px;background:#ffe680;box-shadow:inset 0 0 0 1px rgba(0,0,0,.18);"></div>
<div style="left:247px;top:940px;width:21px;height:16px;background:#ffeeaa;box-shadow:inset 0 0 0 1px rgba(0,0,0,.18);"></div>
<div style="left:269px;top:940px;width:21px;height:16px;background:#fff6d4;box-shadow:inset 0 0 0 1px rgba(0,0,0,.18);"></div>
<div style="left:291px;top:940px;width:21px;height:16px;background:#28220b;box-shadow:inset 0 0 0 1px rgba(0,0,0,.18);"></div>
<div style="left:313px;top:940px;width:21px;height:16px;background:#504416;box-shadow:inset 0 0 0 1px rgba(0,0,0,.18);"></div>
<div style="left:335px;top:940px;width:21px;height:16px;background:#786721;box-shadow:inset 0 0 0 1px rgba(0,0,0,.18);"></div>
<div style="left:357px;top:940px;width:21px;height:16px;background:#a0892c;box-shadow:inset 0 0 0 1px rgba(0,0,0,.18);"></div>
<div style="left:379px;top:940px;width:21px;height:16px;background:#c8ab37;box-shadow:inset 0 0 0 1px rgba(0,0,0,.18);"></div>
<div style="left:401px;top:940px;width:21px;height:16px;background:#d3bc5f;box-shadow:inset 0 0 0 1px rgba(0,0,0,.18);"></div>
<div style="left:423px;top:940px;width:21px;height:16px;background:#decd87;box-shadow:inset 0 0 0 1px rgba(0,0,0,.18);"></div>
<div style="left:445px;top:940px;width:21px;height:16px;background:#e9ddaf;box-shadow:inset 0 0 0 1px rgba(0,0,0,.18);"></div>
<div style="left:467px;top:940px;width:21px;height:16px;background:#f4eed7;box-shadow:inset 0 0 0 1px rgba(0,0,0,.18);"></div>
<div style="left:489px;top:940px;width:20px;height:16px;background:#24221c;box-shadow:inset 0 0 0 1px rgba(0,0,0,.18);"></div>
<div style="left:510px;top:940px;width:20px;height:16px;background:#484538;box-shadow:inset 0 0 0 1px rgba(0,0,0,.18);"></div>
<div style="left:531px;top:940px;width:20px;height:16px;background:#6c6754;box-shadow:inset 0 0 0 1px rgba(0,0,0,.18);"></div>
<div style="left:552px;top:940px;width:20px;height:16px;background:#8f8970;box-shadow:inset 0 0 0 1px rgba(0,0,0,.18);"></div>
<div style="left:573px;top:940px;width:20px;height:16px;background:#aba793;box-shadow:inset 0 0 0 1px rgba(0,0,0,.18);"></div>
<div style="left:594px;top:940px;width:20px;height:16px;background:#c7c4b7;box-shadow:inset 0 0 0 1px rgba(0,0,0,.18);"></div>
<div style="left:615px;top:940px;width:20px;height:16px;background:#e3e2db;box-shadow:inset 0 0 0 1px rgba(0,0,0,.18);"></div>
<div style="left:636px;top:940px;width:20px;height:16px;background:#222a00;box-shadow:inset 0 0 0 1px rgba(0,0,0,.18);"></div>
<div style="left:657px;top:940px;width:20px;height:16px;background:#445500;box-shadow:inset 0 0 0 1px rgba(0,0,0,.18);"></div>
<div style="left:678px;top:940px;width:20px;height:16px;background:#668000;box-shadow:inset 0 0 0 1px rgba(0,0,0,.18);"></div>
<div style="left:699px;top:940px;width:20px;height:16px;background:#88aa00;box-shadow:inset 0 0 0 1px rgba(0,0,0,.18);"></div>
<div style="left:720px;top:940px;width:20px;height:16px;background:#aad400;box-shadow:inset 0 0 0 1px rgba(0,0,0,.18);"></div>
<div style="left:741px;top:940px;width:20px;height:16px;background:#ccff00;box-shadow:inset 0 0 0 1px rgba(0,0,0,.18);"></div>
<div style="left:762px;top:940px;width:20px;height:16px;background:#d4ff2b;box-shadow:inset 0 0 0 1px rgba(0,0,0,.18);"></div>
<div style="left:783px;top:940px;width:20px;height:16px;background:#ddff55;box-shadow:inset 0 0 0 1px rgba(0,0,0,.18);"></div>
<div style="left:804px;top:940px;width:20px;height:16px;background:#e5ff80;box-shadow:inset 0 0 0 1px rgba(0,0,0,.18);"></div>
<div style="left:825px;top:940px;width:20px;height:16px;background:#eeffaa;box-shadow:inset 0 0 0 1px rgba(0,0,0,.18);"></div>
<div style="left:846px;top:940px;width:20px;height:16px;background:#f6ffd4;box-shadow:inset 0 0 0 1px rgba(0,0,0,.18);"></div>
<div style="left:867px;top:940px;width:20px;height:16px;background:#22280b;box-shadow:inset 0 0 0 1px rgba(0,0,0,.18);"></div>
<div style="left:888px;top:940px;width:20px;height:16px;background:#445016;box-shadow:inset 0 0 0 1px rgba(0,0,0,.18);"></div>
<div style="left:909px;top:940px;width:20px;height:16px;background:#677821;box-shadow:inset 0 0 0 1px rgba(0,0,0,.18);"></div>
<div style="left:930px;top:940px;width:20px;height:16px;background:#89a02c;box-shadow:inset 0 0 0 1px rgba(0,0,0,.18);"></div>
<div style="left:951px;top:940px;width:20px;height:16px;background:#abc837;box-shadow:inset 0 0 0 1px rgba(0,0,0,.18);"></div>
<div style="left:972px;top:940px;width:20px;height:16px;background:#bcd35f;box-shadow:inset 0 0 0 1px rgba(0,0,0,.18);"></div>
<div style="left:993px;top:940px;width:20px;height:16px;background:#cdde87;box-shadow:inset 0 0 0 1px rgba(0,0,0,.18);"></div>
<div style="left:1014px;top:940px;width:20px;height:16px;background:#dde9af;box-shadow:inset 0 0 0 1px rgba(0,0,0,.18);"></div>
<div style="left:1035px;top:940px;width:20px;height:16px;background:#eef4d7;box-shadow:inset 0 0 0 1px rgba(0,0,0,.18);"></div>
<div style="left:1056px;top:940px;width:20px;height:16px;background:#22241c;box-shadow:inset 0 0 0 1px rgba(0,0,0,.18);"></div>
<div style="left:1077px;top:940px;width:20px;height:16px;background:#454838;box-shadow:inset 0 0 0 1px rgba(0,0,0,.18);"></div>
<div style="left:1098px;top:940px;width:20px;height:16px;background:#676c54;box-shadow:inset 0 0 0 1px rgba(0,0,0,.18);"></div>
<div style="left:1119px;top:940px;width:20px;height:16px;background:#898f70;box-shadow:inset 0 0 0 1px rgba(0,0,0,.18);"></div>
<div style="left:1140px;top:940px;width:20px;height:16px;background:#a7ab93;box-shadow:inset 0 0 0 1px rgba(0,0,0,.18);"></div>
<div style="left:1161px;top:940px;width:20px;height:16px;background:#c4c7b7;box-shadow:inset 0 0 0 1px rgba(0,0,0,.18);"></div>
<div style="left:1182px;top:940px;width:20px;height:16px;background:#e2e3db;box-shadow:inset 0 0 0 1px rgba(0,0,0,.18);"></div>
<div style="left:1203px;top:940px;width:20px;height:16px;background:#112a00;box-shadow:inset 0 0 0 1px rgba(0,0,0,.18);"></div>
<div style="left:1224px;top:940px;width:20px;height:16px;background:#225500;box-shadow:inset 0 0 0 1px rgba(0,0,0,.18);"></div>
<div style="left:1245px;top:940px;width:20px;height:16px;background:#338000;box-shadow:inset 0 0 0 1px rgba(0,0,0,.18);"></div>
<div style="left:1266px;top:940px;width:20px;height:16px;background:#44aa00;box-shadow:inset 0 0 0 1px rgba(0,0,0,.18);"></div>
<div style="left:1287px;top:940px;width:20px;height:16px;background:#55d400;box-shadow:inset 0 0 0 1px rgba(0,0,0,.18);"></div>
<div style="left:1308px;top:940px;width:20px;height:16px;background:#66ff00;box-shadow:inset 0 0 0 1px rgba(0,0,0,.18);"></div>
<div style="left:1329px;top:940px;width:20px;height:16px;background:#80ff2b;box-shadow:inset 0 0 0 1px rgba(0,0,0,.18);"></div>
<div style="left:1350px;top:940px;width:20px;height:16px;background:#99ff55;box-shadow:inset 0 0 0 1px rgba(0,0,0,.18);"></div>
<div style="left:1371px;top:940px;width:20px;height:16px;background:#b2ff80;box-shadow:inset 0 0 0 1px rgba(0,0,0,.18);"></div>
<div style="left:1392px;top:940px;width:20px;height:16px;background:#ccffaa;box-shadow:inset 0 0 0 1px rgba(0,0,0,.18);"></div>
<div style="left:1413px;top:940px;width:20px;height:16px;background:#e5ffd4;box-shadow:inset 0 0 0 1px rgba(0,0,0,.18);"></div>
<div style="left:1434px;top:940px;width:20px;height:16px;background:#17280b;box-shadow:inset 0 0 0 1px rgba(0,0,0,.18);"></div>
<div style="left:1455px;top:940px;width:20px;height:16px;background:#2d5016;box-shadow:inset 0 0 0 1px rgba(0,0,0,.18);"></div>
<div style="left:1476px;top:940px;width:20px;height:16px;background:#447821;box-shadow:inset 0 0 0 1px rgba(0,0,0,.18);"></div>
<div style="left:1497px;top:940px;width:20px;height:16px;background:#5aa02c;box-shadow:inset 0 0 0 1px rgba(0,0,0,.18);"></div>
<div style="left:1518px;top:940px;width:20px;height:16px;background:#71c837;box-shadow:inset 0 0 0 1px rgba(0,0,0,.18);"></div>
<div style="left:1539px;top:940px;width:20px;height:16px;background:#8dd35f;box-shadow:inset 0 0 0 1px rgba(0,0,0,.18);"></div>
<div style="left:1560px;top:940px;width:20px;height:16px;background:#aade87;box-shadow:inset 0 0 0 1px rgba(0,0,0,.18);"></div>
<div style="left:1581px;top:940px;width:20px;height:16px;background:#c6e9af;box-shadow:inset 0 0 0 1px rgba(0,0,0,.18);"></div>
<div style="left:1602px;top:940px;width:20px;height:16px;background:#e3f4d7;box-shadow:inset 0 0 0 1px rgba(0,0,0,.18);"></div>
<div style="left:1623px;top:940px;width:20px;height:16px;background:#1f241c;box-shadow:inset 0 0 0 1px rgba(0,0,0,.18);"></div>
<div style="left:1644px;top:940px;width:20px;height:16px;background:#3e4838;box-shadow:inset 0 0 0 1px rgba(0,0,0,.18);"></div>
<div style="left:1665px;top:940px;width:20px;height:16px;background:#5d6c54;box-shadow:inset 0 0 0 1px rgba(0,0,0,.18);"></div>
<div style="left:1686px;top:940px;width:20px;height:16px;background:#7c8f70;box-shadow:inset 0 0 0 1px rgba(0,0,0,.18);"></div>
<div style="left:1707px;top:940px;width:20px;height:16px;background:#9dab93;box-shadow:inset 0 0 0 1px rgba(0,0,0,.18);"></div>
<div style="left:1728px;top:940px;width:20px;height:16px;background:#bec7b7;box-shadow:inset 0 0 0 1px rgba(0,0,0,.18);"></div>
<div style="left:1749px;top:940px;width:20px;height:16px;background:#dee3db;box-shadow:inset 0 0 0 1px rgba(0,0,0,.18);"></div>
<div style="left:1770px;top:940px;width:20px;height:16px;background:#002a00;box-shadow:inset 0 0 0 1px rgba(0,0,0,.18);"></div>
<div style="left:1791px;top:940px;width:20px;height:16px;background:#005500;box-shadow:inset 0 0 0 1px rgba(0,0,0,.18);"></div>
<div style="left:1812px;top:940px;width:20px;height:16px;background:#008000;box-shadow:inset 0 0 0 1px rgba(0,0,0,.18);"></div>
<div style="left:1833px;top:940px;width:20px;height:16px;background:#00aa00;box-shadow:inset 0 0 0 1px rgba(0,0,0,.18);"></div>
<div style="left:1px;top:923px;width:33px;height:33px;background:#ffffff;"></div>
<svg style="left:1px;top:923px;" width="33" height="33" viewBox="0 0 33 33"><path d="M2.500 2.500L30.500 30.500M30.500 2.500L2.500 30.500" stroke="#c8102e" stroke-width="2.200" fill="none"/></svg>
<div style="left:35px;top:923px;width:33px;height:33px;background:#000000;"></div>
<div style="left:69px;top:923px;width:33px;height:33px;background:#808080;"></div>
<div style="left:103px;top:923px;width:33px;height:33px;background:#ffffff;"></div>
<svg style="left:1858px;top:936px;" width="13" height="8" viewBox="0 0 13 8"><path d="M0.800 7.200L6.500 1.500L12.200 7.200" stroke="#6e6e6e" stroke-width="1.800" fill="none"/></svg>
<svg style="left:1880px;top:935px;" width="13" height="8" viewBox="0 0 13 8"><path d="M0.800 0.800L6.500 6.500L12.200 0.800" stroke="#eeeeec" stroke-width="1.800" fill="none"/></svg>
<div style="left:1902px;top:937px;width:13px;height:2.1px;background:#f4f4f4;"></div>
<div style="left:1902px;top:941.9px;width:13px;height:2.1px;background:#f4f4f4;"></div>
<div style="left:1902px;top:947px;width:13px;height:2.1px;background:#f4f4f4;"></div>
<span class="t" style="left:28.80px;top:963.24px;font-size:18.5px;line-height:18.5px;color:#eeeeec;letter-spacing:-0.874px;">Fill:</span>
<span class="t" style="left:74.20px;top:963.24px;font-size:18.5px;line-height:18.5px;color:#eeeeec;letter-spacing:-0.560px;font-weight:bold;">Unset</span>
<span class="t" style="left:0.30px;top:987.64px;font-size:18.5px;line-height:18.5px;color:#eeeeec;letter-spacing:-0.816px;">Stroke:</span>
<span class="t" style="left:74.20px;top:987.64px;font-size:18.5px;line-height:18.5px;color:#eeeeec;letter-spacing:-0.560px;font-weight:bold;">Unset</span>
<span class="t" style="left:133.00px;top:987.64px;font-size:18.5px;line-height:18.5px;color:#eeeeec;letter-spacing:-0.511px;">0.00100</span>
<span class="t" style="left:201.90px;top:975.34px;font-size:18.5px;line-height:18.5px;color:#eeeeec;letter-spacing:-1.415px;">O:</span>
<div style="left:223.6px;top:958.4px;width:75.20000000000002px;height:51.60000000000002px;background:#2d2d2d;border:1px solid #1b1b1b;border-radius:5px 5px 0 0;"></div>
<div style="left:264px;top:959.4px;width:1px;height:49.60000000000002px;background:#262626;"></div>
<div style="left:280px;top:959.4px;width:1px;height:49.60000000000002px;background:#262626;"></div>
<span class="t" style="left:234.40px;top:975.34px;font-size:18.5px;line-height:18.5px;color:#eeeeec;letter-spacing:-1.089px;">100</span>
<div style="left:266px;top:982.5px;width:11.800000000000011px;height:2px;background:#eeeeec;"></div>
<div style="left:283.6px;top:982.5px;width:10.899999999999977px;height:2px;background:#6a6a6a;"></div>
<div style="left:288.1px;top:978.0px;width:2px;height:10.899999999999977px;background:#6a6a6a;"></div>
<div style="left:308.3px;top:970px;width:3.7px;height:25px;background:#ffffff;"></div>
<span class="t" style="left:318.50px;top:975.54px;font-size:18.5px;line-height:18.5px;color:#eeeeec;letter-spacing:-0.110px;font-style:italic;">[root]</span>
<svg style="left:381px;top:975.5px;" width="14" height="14" viewBox="0 0 14 14"><path d="M0.900 8.300C3 4.300 11 4.300 13.100 8.300C11 12.300 3 12.300 0.900 8.300z" fill="none" stroke="#8a8a8a" stroke-width="1.800"/><circle cx="7" cy="8.300" r="2.400" fill="#8a8a8a"/><path d="M2.300 2.800l1.500 2.100M7 1.300v2.600M11.700 2.800l-1.500 2.100" stroke="#8a8a8a" stroke-width="1.500"/></svg>
<svg style="left:418.5px;top:975.5px;" width="15" height="15" viewBox="0 0 15 15"><rect x="0.400" y="6.600" width="10" height="8" rx="1" fill="#8a8a8a"/><path d="M7.300 6.800V4a3 3 0 0 1 6 0v2" fill="none" stroke="#8a8a8a" stroke-width="1.900"/></svg>
<span class="t" style="left:450.30px;top:975.04px;font-size:18.5px;line-height:18.5px;color:#eeeeec;letter-spacing:-0.222px;font-weight:bold;">Group</span>
<span class="t" style="left:504.68px;top:975.04px;font-size:18.5px;line-height:18.5px;color:#eeeeec;letter-spacing:-0.222px;"> of </span>
<span class="t" style="left:529.50px;top:975.04px;font-size:18.5px;line-height:18.5px;color:#eeeeec;letter-spacing:-0.222px;font-weight:bold;">8</span>
<span class="t" style="left:539.57px;top:975.04px;font-size:18.5px;line-height:18.5px;color:#eeeeec;letter-spacing:-0.222px;"> objects in root. Click selection again to toggle scale/rotation handles.</span>
<div style="left:443px;top:960px;width:1px;height:43px;background:#2f2f2f;"></div>
<div style="left:1549px;top:960px;width:1px;height:43px;background:#2f2f2f;"></div>
<span class="t" style="left:1557.60px;top:963.14px;font-size:18.5px;line-height:18.5px;color:#eeeeec;letter-spacing:-1.740px;">X:</span>
<span class="t" style="left:1597.30px;top:963.14px;font-size:18.5px;line-height:18.5px;color:#eeeeec;letter-spacing:-0.652px;">0.24</span>
<span class="t" style="left:1557.60px;top:987.14px;font-size:18.5px;line-height:18.5px;color:#eeeeec;letter-spacing:-1.530px;">Y:</span>
<span class="t" style="left:1597.00px;top:987.14px;font-size:18.5px;line-height:18.5px;color:#eeeeec;letter-spacing:-0.577px;">0.00</span>
<span class="t" style="left:1644.00px;top:975.14px;font-size:18.5px;line-height:18.5px;color:#eeeeec;letter-spacing:-1.870px;">Z:</span>
<div style="left:1661.7px;top:959px;width:105.09999999999991px;height:51px;background:#2d2d2d;border:1px solid #1b1b1b;border-radius:5px 5px 0 0;"></div>
<div style="left:1732px;top:960px;width:1px;height:49px;background:#262626;"></div>
<div style="left:1748px;top:960px;width:1px;height:49px;background:#262626;"></div>
<span class="t" style="left:1676.70px;top:975.14px;font-size:18.5px;line-height:18.5px;color:#eeeeec;letter-spacing:-0.804px;">568%</span>
<div style="left:1734px;top:982.3px;width:12px;height:2px;background:#eeeeec;"></div>
<div style="left:1751px;top:982.3px;width:12.5px;height:2px;background:#eeeeec;"></div>
<div style="left:1756.2px;top:977.0px;width:2px;height:12.5px;background:#eeeeec;"></div>
<span class="t" style="left:1776.80px;top:975.14px;font-size:18.5px;line-height:18.5px;color:#eeeeec;letter-spacing:-2.250px;">R:</span>
<div style="left:1795.8px;top:959px;width:114.79999999999995px;height:51px;background:#2d2d2d;border:1px solid #1b1b1b;border-radius:5px 5px 0 0;"></div>
<div style="left:1875px;top:960px;width:1px;height:49px;background:#262626;"></div>
<div style="left:1892px;top:960px;width:1px;height:49px;background:#262626;"></div>
<span class="t" style="left:1820.00px;top:975.14px;font-size:18.5px;line-height:18.5px;color:#eeeeec;letter-spacing:-0.481px;">0.00°</span>
<div style="left:1877.6px;top:982.3px;width:12.400000000000091px;height:2px;background:#eeeeec;"></div>
<div style="left:1895px;top:982.3px;width:12.599999999999909px;height:2px;background:#eeeeec;"></div>
<div style="left:1900.3px;top:977.0px;width:2px;height:12.599999999999909px;background:#eeeeec;"></div>
<div style="left:120px;top:121px;width:1px;height:22px;background:#e4e4e4;"></div>
<div style="left:187px;top:140px;width:1px;height:3px;background:#e4e4e4;"></div>
<div style="left:255px;top:140px;width:1px;height:3px;background:#e4e4e4;"></div>
<div style="left:323px;top:140px;width:1px;height:3px;background:#e4e4e4;"></div>
<div style="left:391px;top:139px;width:1px;height:4px;background:#e4e4e4;"></div>
<div style="left:459px;top:140px;width:1px;height:3px;background:#e4e4e4;"></div>
<div style="left:527px;top:140px;width:1px;height:3px;background:#e4e4e4;"></div>
<div style="left:595px;top:140px;width:1px;height:3px;background:#e4e4e4;"></div>
<div style="left:663px;top:132px;width:1px;height:11px;background:#e4e4e4;"></div>
<span class="t" style="left:123.30px;top:121.33px;font-size:15.2px;line-height:15.2px;color:#eeeeec;letter-spacing:0.000px;transform:scaleX(.9);transform-origin:left;">0</span>
<div style="left:123.5px;top:134px;width:439px;height:2.2px;background:#1a5fb4;"></div>
<div style="left:116px;top:131.1px;width:8px;height:8px;border:2px solid #1a5fb4;border-radius:50%;"></div>
<div style="left:562px;top:131.1px;width:8px;height:8px;border:2px solid #1a5fb4;border-radius:50%;"></div>
<svg style="left:488.3px;top:139.2px;" width="9.4" height="3.8" viewBox="0 0 9.4 3.8"><path d="M0 0h9.400l-4.700 3.800z" fill="#f0f0f0"/></svg>
<div style="left:61px;top:198px;width:3px;height:1px;background:#e4e4e4;"></div>
<div style="left:61px;top:266px;width:3px;height:1px;background:#e4e4e4;"></div>
<div style="left:61px;top:334px;width:3px;height:1px;background:#e4e4e4;"></div>
<div style="left:56px;top:402px;width:8px;height:1px;background:#e4e4e4;"></div>
<div style="left:61px;top:469px;width:3px;height:1px;background:#e4e4e4;"></div>
<div style="left:61px;top:537px;width:3px;height:1px;background:#e4e4e4;"></div>
<div style="left:61px;top:605px;width:3px;height:1px;background:#e4e4e4;"></div>
<div style="left:57px;top:673px;width:7px;height:1px;background:#e4e4e4;"></div>
<div style="left:61px;top:741px;width:3px;height:1px;background:#e4e4e4;"></div>
<div style="left:61px;top:809px;width:3px;height:1px;background:#e4e4e4;"></div>
<div style="left:61px;top:877px;width:3px;height:1px;background:#e4e4e4;"></div>
<div style="left:42px;top:401.5px;width:22px;height:1px;background:#e4e4e4;"></div>
<div style="left:55px;top:405.5px;width:2.2px;height:137px;background:#1a5fb4;"></div>
<div style="left:52.1px;top:398px;width:8px;height:8px;border:2px solid #1a5fb4;border-radius:50%;"></div>
<div style="left:52.1px;top:542px;width:8px;height:8px;border:2px solid #1a5fb4;border-radius:50%;"></div>
<svg style="left:42px;top:403px;" width="14" height="10" viewBox="0 0 14 10"><ellipse cx="7" cy="5" rx="5" ry="2.500" fill="none" stroke="#eeeeec" stroke-width="1"/></svg>
<svg style="left:60px;top:404px;" width="4" height="10" viewBox="0 0 4 10"><path d="M0 0l4 5-4 5z" fill="#f0f0f0"/></svg>
<svg style="left:44.3px;top:120.5px;" width="15" height="16" viewBox="0 0 15 16"><rect x="0.500" y="7.500" width="10.500" height="8" rx="1" fill="#f2f2f2"/><path d="M8 7.500V4.500a3 3 0 0 1 6 0v2" fill="none" stroke="#f2f2f2" stroke-width="1.800"/></svg>
<svg style="left:686px;top:119px;" width="15" height="13" viewBox="0 0 15 13"><rect x="0.700" y="0.700" width="13.600" height="9" rx="1" fill="none" stroke="#e8e8e8" stroke-width="1.300"/><path d="M4 12h7M7.500 10v2" stroke="#e8e8e8" stroke-width="1.600"/></svg>
<div style="left:120px;top:402px;width:446px;height:144px;background:#ffffff;box-shadow:6px 7px 8px rgba(0,0,0,.5),0 0 14px rgba(0,0,0,.22);"></div>
<svg style="left:64px;top:143px;" width="618" height="756" viewBox="0 0 618 756"><rect x="171.400" y="262.700" width="214" height="93" rx="20" fill="#ffffff" stroke="#000" stroke-width="7.400"/><line x1="61" y1="309" x2="169.400" y2="309" stroke="#808080" stroke-width="10" stroke-linecap="round"/><line x1="387.300" y1="309" x2="497" y2="309" stroke="#808080" stroke-width="10" stroke-linecap="round"/><text x="114.500" y="293" font-family="Liberation Sans, sans-serif" font-size="36.500" fill="#808080" text-anchor="middle" textLength="16" lengthAdjust="spacingAndGlyphs">1</text><text x="441" y="293" font-family="Liberation Sans, sans-serif" font-size="36" fill="#808080" text-anchor="middle">2</text><text x="275.500" y="402.500" font-family="Liberation Sans, sans-serif" font-size="45" fill="#000" text-anchor="middle" textLength="105" lengthAdjust="spacingAndGlyphs">130Ω</text><rect x="56.500" y="259.500" width="445" height="143.700" fill="none" stroke="#3535c0" stroke-width="1" stroke-dasharray="4 4"/></svg>
<svg style="left:101.9px;top:384px" width="20" height="20" viewBox="-10 -10 20 20"><g transform="rotate(45)"><path d="M-8.25 0L-2.8499999999999996 -4.8V-2.05H2.8499999999999996V-4.8L8.25 0L2.8499999999999996 4.8V2.05H-2.8499999999999996V4.8z" fill="#000" stroke="#e6e6e6" stroke-width="0.700" stroke-opacity="0.800"/></g></svg>
<svg style="left:563px;top:384px" width="20" height="20" viewBox="-10 -10 20 20"><g transform="rotate(-45)"><path d="M-8.25 0L-2.8499999999999996 -4.8V-2.05H2.8499999999999996V-4.8L8.25 0L2.8499999999999996 4.8V2.05H-2.8499999999999996V4.8z" fill="#000" stroke="#e6e6e6" stroke-width="0.700" stroke-opacity="0.800"/></g></svg>
<svg style="left:101.9px;top:544px" width="20" height="20" viewBox="-10 -10 20 20"><g transform="rotate(-45)"><path d="M-8.25 0L-2.8499999999999996 -4.8V-2.05H2.8499999999999996V-4.8L8.25 0L2.8499999999999996 4.8V2.05H-2.8499999999999996V4.8z" fill="#000" stroke="#e6e6e6" stroke-width="0.700" stroke-opacity="0.800"/></g></svg>
<svg style="left:563px;top:544px" width="20" height="20" viewBox="-10 -10 20 20"><g transform="rotate(45)"><path d="M-8.25 0L-2.8499999999999996 -4.8V-2.05H2.8499999999999996V-4.8L8.25 0L2.8499999999999996 4.8V2.05H-2.8499999999999996V4.8z" fill="#000" stroke="#e6e6e6" stroke-width="0.700" stroke-opacity="0.800"/></g></svg>
<svg style="left:333px;top:381px" width="20" height="20" viewBox="-10 -10 20 20"><g transform="rotate(90)"><path d="M-7.5 0L-2.0999999999999996 -4.8V-2.05H2.0999999999999996V-4.8L7.5 0L2.0999999999999996 4.8V2.05H-2.0999999999999996V4.8z" fill="#000" stroke="#e6e6e6" stroke-width="0.700" stroke-opacity="0.800"/></g></svg>
<svg style="left:333px;top:547.3px" width="20" height="20" viewBox="-10 -10 20 20"><g transform="rotate(90)"><path d="M-7.5 0L-2.0999999999999996 -4.8V-2.05H2.0999999999999996V-4.8L7.5 0L2.0999999999999996 4.8V2.05H-2.0999999999999996V4.8z" fill="#000" stroke="#e6e6e6" stroke-width="0.700" stroke-opacity="0.800"/></g></svg>
<svg style="left:99px;top:464px" width="20" height="20" viewBox="-10 -10 20 20"><g transform="rotate(0)"><path d="M-7.5 0L-2.0999999999999996 -4.8V-2.05H2.0999999999999996V-4.8L7.5 0L2.0999999999999996 4.8V2.05H-2.0999999999999996V4.8z" fill="#000" stroke="#e6e6e6" stroke-width="0.700" stroke-opacity="0.800"/></g></svg>
<svg style="left:566px;top:464px" width="20" height="20" viewBox="-10 -10 20 20"><g transform="rotate(0)"><path d="M-7.5 0L-2.0999999999999996 -4.8V-2.05H2.0999999999999996V-4.8L7.5 0L2.0999999999999996 4.8V2.05H-2.0999999999999996V4.8z" fill="#000" stroke="#e6e6e6" stroke-width="0.700" stroke-opacity="0.800"/></g></svg>
<div style="left:0px;top:211px;width:31px;height:1px;background:#2e2e2e;"></div>
<div style="left:0px;top:373.5px;width:31px;height:1px;background:#2e2e2e;"></div>
<div style="left:0px;top:505.5px;width:31px;height:1px;background:#2e2e2e;"></div>
<div style="left:0px;top:636px;width:31px;height:1px;background:#2e2e2e;"></div>
<div style="left:0px;top:799px;width:31px;height:1px;background:#2e2e2e;"></div>
<svg style="left:5px;top:122.5px;" width="16" height="16" viewBox="0 0 16 16"><path d="M3 1.200v12.300l3.300-3 2.200 4.800 2.600-1.200-2.200-4.600 4.600-.3z" fill="none" stroke="#f4f4f4" stroke-width="1.700" stroke-linejoin="miter"/></svg>
<svg style="left:5px;top:153.8px;" width="16" height="16" viewBox="0 0 16 16"><rect x="2.800" y="3" width="4.800" height="4.800" fill="none" stroke="#f2f2f2" stroke-width="1.600"/><path d="M7.500 2.500c3-.8 5-1 7-1M2.800 8c-.8 2.500-1.200 4-1.400 6" fill="none" stroke="#cfcfcf" stroke-width="0.800"/><path d="M10 9.200l5 2.800-3.300.8-1.500 2.700z" fill="#f2f2f2"/></svg>
<svg style="left:5px;top:186px;" width="16" height="16" viewBox="0 0 16 16"><circle cx="5.700" cy="5.500" r="4" fill="none" stroke="#f2f2f2" stroke-width="1.600"/><rect x="7.300" y="7.200" width="7" height="7" fill="none" stroke="#f2f2f2" stroke-width="1.600"/><path d="M7 10.200l3.200-3.200" stroke="#f2f2f2" stroke-width="1"/></svg>
<svg style="left:5px;top:221px;" width="16" height="16" viewBox="0 0 16 16"><rect x="1.800" y="1.800" width="12.600" height="12.600" rx="1.500" fill="#ff1493" stroke="#f4f4f4" stroke-width="1.500"/></svg>
<svg style="left:5px;top:253.2px;" width="16" height="16" viewBox="0 0 16 16"><circle cx="8" cy="8" r="6.300" fill="#c71f80" stroke="#f4f4f4" stroke-width="1.500"/></svg>
<svg style="left:5px;top:285.3px;" width="16" height="16" viewBox="0 0 16 16"><path d="M5.500 1.300l4.800 2.800-1.500 5.200-5.500.3-2.300-4.700z" fill="#a8216f" stroke="#f2f2f2" stroke-width="1.200" stroke-linejoin="round"/><path d="M11 6.800l1.300 2.800 3 .3-2.200 2.100.6 3-2.700-1.500-2.700 1.500.6-3-2.200-2.100 3-.3z" fill="#7a1a55" stroke="#f2f2f2" stroke-width="1.200" stroke-linejoin="round"/></svg>
<svg style="left:5px;top:317px;" width="16" height="16" viewBox="0 0 16 16"><path d="M8 1l6.500 3.600v6.800L8 15l-6.500-3.600V4.600z" fill="#f2f2f2"/><path d="M8 2.700l4.600 2.500L8 7.700 3.400 5.200z" fill="#5a1a44"/><path d="M3 6.700l4.200 2.300v4.300L3 11z" fill="#ff1493"/><path d="M13 6.700L8.800 9v4.300L13 11z" fill="#a02070"/></svg>
<svg style="left:5px;top:349.3px;" width="16" height="16" viewBox="0 0 16 16"><path d="M8 8.200a1.300 1.300 0 1 1-1.400 1.600c-.4-1.800 1-3.600 2.900-3.600 2.300 0 3.800 2.200 3.300 4.400-.5 2.300-2.300 3.400-4 3.600M14 14c1.200-3.300 1-6.600-.5-9C11.800 2.300 8.500 1.300 5.800 2.300 3.200 3.200 1.500 5.800 1.700 8.500c.2 2.700 2 5 4.500 5.500" fill="none" stroke="#f2f2f2" stroke-width="1.600" stroke-linecap="round"/></svg>
<svg style="left:5px;top:384px;" width="16" height="16" viewBox="0 0 16 16"><circle cx="1.900" cy="1.700" r="1.800" fill="#1fa31f"/><rect x="0" y="9.200" width="3.800" height="3.800" fill="#1fa31f"/><path d="M1.900 2v8" stroke="#1fa31f" stroke-width="1.100"/><path d="M3.500 10.500c.3-4.500 3-8 7.800-9" fill="none" stroke="#cfcfcf" stroke-width="0.900"/><path d="M12.800 4.300l3.400 3.400-1.700 1.700c-.5 3-3.700 5.600-8.800 7l-1.200-1.200c1.400-5.100 4-8.300 7-8.800z" fill="#f4f4f4"/><path d="M5.500 15.800l4.600-4.600" stroke="#353535" stroke-width="1.100"/><circle cx="10.600" cy="10.700" r="1.300" fill="#353535"/><path d="M12 5.800l2.800 2.800" stroke="#353535" stroke-width="0.700"/></svg>
<svg style="left:5px;top:416px;" width="16" height="16" viewBox="0 0 16 16"><path d="M0.500 2.800c1.200-2 3.800-2.200 3.600-.3-.2 1.500-2.700 2.200-2.300 4 .4 1.700 3.300 1.600 5.400-.8" fill="none" stroke="#1fa31f" stroke-width="1.400"/><path d="M12 2.200l2.800 2.800-1.500 1.500-2.800-2.800z" fill="#f2f2f2"/><path d="M9.700 4.500l2.800 2.800-6.300 6.300-2.800-2.800z" fill="#f2f2f2"/><path d="M2.800 11.600l2.600 2.600-4 1.400z" fill="#1fa31f"/></svg>
<svg style="left:5px;top:448px;" width="16" height="16" viewBox="0 0 16 16"><path d="M2.500 1.500c2-.8 3.500.5 2.300 2-1 1.300-4 1.700-3.400 3.500.6 1.600 3 1.300 4.200.2" fill="none" stroke="#1fa31f" stroke-width="1.400"/><path d="M15 1.300c-.6 2.500-4 6.800-7 9.700l-1.700-1.700c3-3 6.300-6.600 8.700-8z" fill="#f2f2f2"/><path d="M5.600 10l1.800 1.800-1 1-1.800-1.800z" fill="#f2f2f2"/><path d="M4 11.500l1.800 1.800c-1.500 1.700-3.500 2.200-5.300 2.200 1.600-1 2.500-2.500 3.500-4z" fill="#1fa31f"/></svg>
<svg style="left:5px;top:480px;" width="16" height="16" viewBox="0 0 16 16"><path d="M0.300 14.200L4.700 2.800h2.900l4.400 11.400H9.300l-.9-2.500H3.800l-.9 2.500zM4.500 9.600h3.200L6.100 5z" fill="#f2f2f2"/><rect x="13.600" y="0.800" width="1.800" height="14.800" fill="#1fa31f"/></svg>
<svg style="left:5px;top:515px;" width="16" height="16" viewBox="0 0 16 16"><defs><linearGradient id="gr1" x1="0" y1="0" x2="1" y2="1"><stop offset="0" stop-color="#1793e6"/><stop offset="0.450" stop-color="#3aa6ec"/><stop offset="1" stop-color="#e9f4fc"/></linearGradient></defs><rect x="0.700" y="0.700" width="14.600" height="14.600" fill="none" stroke="#f2f2f2" stroke-width="1.200"/><rect x="2.300" y="2.300" width="11.400" height="11.400" fill="url(#gr1)"/></svg>
<svg style="left:5px;top:547px;" width="16" height="16" viewBox="0 0 16 16"><defs><radialGradient id="gr2"><stop offset="0" stop-color="#1a9df0"/><stop offset="0.550" stop-color="#16639a"/><stop offset="1" stop-color="#2d2d2d"/></radialGradient></defs><rect x="0.700" y="0.700" width="14.600" height="14.600" fill="url(#gr2)" stroke="#f2f2f2" stroke-width="1.200"/><path d="M8 0.700c-2.500 2.500-2.500 5 0 7.300s2.500 4.800 0 7.300M0.700 8c2.500 2.500 5 2.500 7.300 0s4.800-2.500 7.300 0" fill="none" stroke="#f2f2f2" stroke-width="1.100"/></svg>
<svg style="left:5px;top:579.5px;" width="16" height="16" viewBox="0 0 16 16"><path d="M3.200 0.500c1.300 1.800 2.400 3 2.400 4.300a2.400 2.400 0 0 1-4.800 0c0-1.300 1.100-2.500 2.400-4.300z" fill="#1a8fe3"/><path d="M13.500 1.500c1 .0 1.800 1.300 1 2.300l-1.700 1.700.7.700-1.200 1.200-.8-.8-6.300 6.300c-.8.800-2.300 1.300-3 .6s-.2-2.200.6-3l6.300-6.300-.8-.8 1.200-1.200.7.700 1.700-1.700c.5-.5 1-.7 1.600-.7z" fill="#f2f2f2"/><path d="M9.800 6.200l1 1-6.300 6.200c-.5.500-1.200.6-1.400.4s-.1-.9.400-1.400z" fill="#353535"/></svg>
<svg style="left:5px;top:611.5px;" width="16" height="16" viewBox="0 0 16 16"><path d="M3.200 7.500c1.300 1.800 2.400 3 2.400 4.300a2.400 2.400 0 0 1-4.800 0c0-1.300 1.100-2.500 2.400-4.300z" fill="#1a8fe3"/><path d="M10.300 1.800l5.200 5.200-5.500 5.500-5.200-5.200z" fill="#f2f2f2"/><path d="M10.300 0.300v3.500" stroke="#f2f2f2" stroke-width="1.200"/><path d="M6.200 6.800l4.100-4.100 4 4.100z" fill="#353535"/><path d="M4.800 7.300l5.500-5.500" stroke="#f2f2f2" stroke-width="1.200"/></svg>
<svg style="left:5px;top:646.5px;" width="16" height="16" viewBox="0 0 16 16"><path d="M0.800 14.500V10.200C3 10 4.500 8.500 5.500 6C6.700 3 8.800 1.400 11 1.400C13.500 1.400 15 2.800 15.200 4.800C14 3.800 12.300 4 11.800 5.300C11.300 6.800 12.500 8.300 15.200 8.600V14.500z" fill="#f2f2f2"/></svg>
<svg style="left:5px;top:678px;" width="16" height="16" viewBox="0 0 16 16"><path d="M5.500 9c0-1.200.8-2 2-2h5c1.200 0 2 .8 2 2v6.500h-9z" fill="#f2f2f2"/><rect x="7.500" y="3.800" width="5" height="2.400" fill="#f2f2f2"/><rect x="9" y="1.500" width="2" height="1.500" fill="#f2f2f2"/><g fill="#9a9a9a"><circle cx="2.500" cy="1.800" r=".8"/><circle cx="5" cy="2.800" r=".8"/><circle cx="1.300" cy="4.300" r=".8"/><circle cx="3.600" cy="4.800" r=".8"/><circle cx="6" cy="5.300" r=".7"/><circle cx="2.300" cy="7" r=".8"/><circle cx="4.500" cy="7.300" r=".7"/></g></svg>
<svg style="left:5px;top:710px;" width="16" height="16" viewBox="0 0 16 16"><path d="M11.500 1.200l4 4-5 5-4-4z" fill="#f2f2f2"/><path d="M5.800 6.900l4 4-2.500 2.500-4-4z" fill="#8c8c8c"/><rect x="0.800" y="13.600" width="3.200" height="1.700" fill="#f2f2f2"/><rect x="8" y="13.600" width="7.500" height="1.700" fill="#f2f2f2"/></svg>
<svg style="left:5px;top:742.5px;" width="16" height="16" viewBox="0 0 16 16"><path d="M1 2.200c4-.3 5.200 1.300 6 3.800.8 2.600 2 4 4.500 4" fill="none" stroke="#f2f2f2" stroke-width="2"/><path d="M10.300 5.500l5.200 4.800-5.200 4.500z" fill="#f2f2f2"/></svg>
<svg style="left:5px;top:774px;" width="16" height="16" viewBox="0 0 16 16"><circle cx="8" cy="3.300" r="2" fill="none" stroke="#f2f2f2" stroke-width="1.400"/><path d="M7 5l-3.500 10.500M9 5l3.500 10.500" stroke="#f2f2f2" stroke-width="1.500" fill="none"/><path d="M1 10.700h14" stroke="#bdbdbd" stroke-width="0.900"/><circle cx="8" cy="10.700" r="1.100" fill="#bdbdbd"/></svg>
<svg style="left:5px;top:809px;" width="16" height="16" viewBox="0 0 16 16"><path d="M2.800 1.500h7.200c1.700 0 3 1.300 3 3v10h-10.200z" fill="none" stroke="#f2f2f2" stroke-width="1.700"/><path d="M3 4.800h3.300M3 7.200h4.200M3 9.600h3.300M3 12h4.200" stroke="#f2f2f2" stroke-width="1.100"/></svg>
<svg style="left:5px;top:842px;" width="16" height="16" viewBox="0 0 16 16"><circle cx="6.800" cy="6.800" r="5.300" fill="none" stroke="#f2f2f2" stroke-width="1.700"/><path d="M10.800 10.800l4 4" stroke="#f2f2f2" stroke-width="2.200" stroke-linecap="round"/></svg>
<svg style="left:5px;top:873px;" width="16" height="16" viewBox="0 0 16 16"><path d="M6 3.800V1.300h6c2 0 3.200 1.200 3.200 3.200v7.500h-2.700" fill="none" stroke="#f2f2f2" stroke-width="1.500"/><path d="M0.900 4.500h6.600l3.600 3.600v7H0.900z" fill="none" stroke="#f2f2f2" stroke-width="1.700"/><path d="M7 5v3.600h3.600" fill="none" stroke="#f2f2f2" stroke-width="1.200"/></svg>
<svg style="left:14px;top:82px;" width="16" height="16" viewBox="0 0 16 16"><g fill="#ffffff" shape-rendering="crispEdges"><rect x="0" y="0" width="1" height="1"/><rect x="0" y="14" width="1" height="1"/><rect x="2" y="0" width="1" height="1"/><rect x="2" y="14" width="1" height="1"/><rect x="0" y="2" width="1" height="1"/><rect x="14" y="2" width="1" height="1"/><rect x="4" y="0" width="1" height="1"/><rect x="4" y="14" width="1" height="1"/><rect x="0" y="4" width="1" height="1"/><rect x="14" y="4" width="1" height="1"/><rect x="6" y="0" width="1" height="1"/><rect x="6" y="14" width="1" height="1"/><rect x="0" y="6" width="1" height="1"/><rect x="14" y="6" width="1" height="1"/><rect x="8" y="0" width="1" height="1"/><rect x="8" y="14" width="1" height="1"/><rect x="0" y="8" width="1" height="1"/><rect x="14" y="8" width="1" height="1"/><rect x="10" y="0" width="1" height="1"/><rect x="10" y="14" width="1" height="1"/><rect x="0" y="10" width="1" height="1"/><rect x="14" y="10" width="1" height="1"/><rect x="12" y="0" width="1" height="1"/><rect x="12" y="14" width="1" height="1"/><rect x="0" y="12" width="1" height="1"/><rect x="14" y="12" width="1" height="1"/><rect x="14" y="0" width="1" height="1"/><rect x="14" y="14" width="1" height="1"/></g><rect x="2.100" y="8.050" width="8" height="5" fill="#e8e8e8"/><circle cx="9.500" cy="5.700" r="3.900" fill="#e8e8e8" stroke="#353535" stroke-width="0.700"/></svg>
<svg style="left:55px;top:82px;" width="16" height="16" viewBox="0 0 16 16"><g fill="#ffffff" shape-rendering="crispEdges"><rect x="0" y="0" width="1" height="1"/><rect x="0" y="14" width="1" height="1"/><rect x="2" y="0" width="1" height="1"/><rect x="2" y="14" width="1" height="1"/><rect x="0" y="2" width="1" height="1"/><rect x="14" y="2" width="1" height="1"/><rect x="4" y="0" width="1" height="1"/><rect x="4" y="14" width="1" height="1"/><rect x="0" y="4" width="1" height="1"/><rect x="14" y="4" width="1" height="1"/><rect x="6" y="0" width="1" height="1"/><rect x="6" y="14" width="1" height="1"/><rect x="0" y="6" width="1" height="1"/><rect x="14" y="6" width="1" height="1"/><rect x="8" y="0" width="1" height="1"/><rect x="8" y="14" width="1" height="1"/><rect x="0" y="8" width="1" height="1"/><rect x="14" y="8" width="1" height="1"/><rect x="10" y="0" width="1" height="1"/><rect x="10" y="14" width="1" height="1"/><rect x="0" y="10" width="1" height="1"/><rect x="14" y="10" width="1" height="1"/><rect x="12" y="0" width="1" height="1"/><rect x="12" y="14" width="1" height="1"/><rect x="0" y="12" width="1" height="1"/><rect x="14" y="12" width="1" height="1"/><rect x="14" y="0" width="1" height="1"/><rect x="14" y="14" width="1" height="1"/></g><path d="M5.600 2h7.300l-2.900 2.800H2.100zM5.600 6h7.300l-2.900 3H2.100zM5.600 10h7.300l-2.900 3H2.100z" fill="#d8d8d8"/></svg>
<svg style="left:96px;top:82px;" width="16" height="16" viewBox="0 0 16 16"><g fill="#8c8c8c" shape-rendering="crispEdges"><rect x="0" y="0" width="1" height="1"/><rect x="0" y="14" width="1" height="1"/><rect x="2" y="0" width="1" height="1"/><rect x="2" y="14" width="1" height="1"/><rect x="0" y="2" width="1" height="1"/><rect x="14" y="2" width="1" height="1"/><rect x="4" y="0" width="1" height="1"/><rect x="4" y="14" width="1" height="1"/><rect x="0" y="4" width="1" height="1"/><rect x="14" y="4" width="1" height="1"/><rect x="6" y="0" width="1" height="1"/><rect x="6" y="14" width="1" height="1"/><rect x="0" y="6" width="1" height="1"/><rect x="14" y="6" width="1" height="1"/><rect x="8" y="0" width="1" height="1"/><rect x="8" y="14" width="1" height="1"/><rect x="0" y="8" width="1" height="1"/><rect x="14" y="8" width="1" height="1"/><rect x="10" y="0" width="1" height="1"/><rect x="10" y="14" width="1" height="1"/><rect x="0" y="10" width="1" height="1"/><rect x="14" y="10" width="1" height="1"/><rect x="12" y="0" width="1" height="1"/><rect x="12" y="14" width="1" height="1"/><rect x="0" y="12" width="1" height="1"/><rect x="14" y="12" width="1" height="1"/><rect x="14" y="0" width="1" height="1"/><rect x="14" y="14" width="1" height="1"/></g><rect x="2.100" y="8.050" width="8" height="5" fill="#8c8c8c"/><circle cx="9.500" cy="5.700" r="3.900" fill="#8c8c8c" stroke="#353535" stroke-width="0.700"/></svg>
<svg style="left:137px;top:82px;" width="16" height="16" viewBox="0 0 16 16"><rect x="4.3" y="4" width="1.800" height="1.100" fill="#f4f4f4"/><rect x="7.2" y="4" width="1.800" height="1.100" fill="#f4f4f4"/><rect x="4.3" y="14.1" width="1.800" height="1.100" fill="#f4f4f4"/><rect x="7.2" y="14.1" width="1.800" height="1.100" fill="#f4f4f4"/><rect x="1" y="7.1" width="1.100" height="1.800" fill="#f4f4f4"/><rect x="1" y="10" width="1.100" height="1.800" fill="#f4f4f4"/><rect x="11.1" y="7.1" width="1.100" height="1.800" fill="#f4f4f4"/><rect x="11.1" y="10" width="1.100" height="1.800" fill="#f4f4f4"/><path d="M1.550 6V5.300a.8.800 0 0 1 .8-.8H3.100" fill="none" stroke="#f4f4f4" stroke-width="1.100"/><path d="M1.550 13.100v.8a.8.800 0 0 0 .8.800H3.100" fill="none" stroke="#f4f4f4" stroke-width="1.100"/><path d="M11.650 13.100v.8a.8.800 0 0 1-.8.800H10.100" fill="none" stroke="#f4f4f4" stroke-width="1.100"/><rect x="9.900" y="0.750" width="5.300" height="5.300" fill="#f0f0f0"/></svg>
<div style="left:168px;top:71px;width:1px;height:39px;background:#2e2e2e;"></div>
<svg style="left:184px;top:82px;" width="16" height="16" viewBox="0 0 16 16"><rect x="11" y="0" width="5.100" height="10" fill="#8f8f8f"/><rect x="-0.150" y="11" width="10.200" height="5.100" fill="#f4f4f4"/><path d="M9.300 1.800c-3 .1-5 1.800-5.200 4.600" fill="none" stroke="#0ba00b" stroke-width="2.300"/><path d="M1 5.900h6.100L4 9.100z" fill="#0ba00b"/></svg>
<svg style="left:225px;top:82px;" width="16" height="16" viewBox="0 0 16 16"><rect x="0" y="0" width="5" height="10" fill="#8f8f8f"/><rect x="5.900" y="11" width="10.200" height="5.100" fill="#f4f4f4"/><path d="M6.700 1.800c3 .1 5 1.800 5.200 4.600" fill="none" stroke="#0ba00b" stroke-width="2.300"/><path d="M15 5.900H8.900L12 9.100z" fill="#0ba00b"/></svg>
<svg style="left:266.5px;top:82px;" width="16" height="16" viewBox="0 0 16 16"><path d="M0.400 13L6 2.750h.4V13z" fill="#8c8c8c"/><path d="M15.600 13L10.100 2.750h-.4V13z" fill="#f0f0f0"/><path d="M8.030 0.900v14.300" stroke="#ffffff" stroke-width="1.200" stroke-dasharray="2 1.100"/></svg>
<svg style="left:307.5px;top:82px;" width="16" height="16" viewBox="0 0 16 16"><path d="M2.500 1.100l10.200 5.200v.5H2.500z" fill="#8c8c8c"/><path d="M2.500 15.900l10.200-5.200v-.5H2.500z" fill="#f0f0f0"/><path d="M0.300 8.530h14.600" stroke="#ffffff" stroke-width="1.200" stroke-dasharray="2 1.100"/></svg>
<div style="left:338px;top:71px;width:1px;height:39px;background:#2e2e2e;"></div>
<svg style="left:355px;top:82px;" width="16" height="16" viewBox="0 0 16 16"><rect x="0" y="1" width="13.200" height="2" fill="#ffffff"/><rect x="0" y="5" width="5.100" height="2" fill="#9a9a9a"/><rect x="0" y="9" width="5.100" height="2" fill="#9a9a9a"/><rect x="0" y="13" width="5.100" height="2" fill="#9a9a9a"/><path d="M10 4.95l3.0 2.75h-1.85V15.1h-2.3V7.7h-1.85z" fill="#0ba00b"/></svg>
<svg style="left:396px;top:82px;" width="16" height="16" viewBox="0 0 16 16"><rect x="0" y="1" width="5.100" height="2" fill="#9a9a9a"/><rect x="0" y="5" width="13.200" height="2" fill="#ffffff"/><rect x="0" y="9" width="5.100" height="2" fill="#9a9a9a"/><rect x="0" y="13" width="5.100" height="2" fill="#9a9a9a"/><path d="M10 8.05l2.9 2.75h-1.75V15.1h-2.3V10.8h-1.75z" fill="#0ba00b"/></svg>
<svg style="left:437px;top:82px;" width="16" height="16" viewBox="0 0 16 16"><rect x="0" y="1" width="5.100" height="2" fill="#9a9a9a"/><rect x="0" y="5" width="5.100" height="2" fill="#9a9a9a"/><rect x="0" y="9" width="13.200" height="2" fill="#ffffff"/><rect x="0" y="13" width="5.100" height="2" fill="#9a9a9a"/><path d="M10 7.6l2.9 -2.75h-1.75V0.9h-2.3V4.85h-1.75z" fill="#0ba00b"/></svg>
<svg style="left:478px;top:82px;" width="16" height="16" viewBox="0 0 16 16"><rect x="0" y="1" width="5.100" height="2" fill="#9a9a9a"/><rect x="0" y="5" width="5.100" height="2" fill="#9a9a9a"/><rect x="0" y="9" width="5.100" height="2" fill="#9a9a9a"/><rect x="0" y="13" width="13.200" height="2" fill="#ffffff"/><path d="M10 10.6l3.0 -2.75h-1.85V0.9h-2.3V7.85h-1.85z" fill="#0ba00b"/></svg>
<div style="left:507px;top:71px;width:1px;height:39px;background:#2e2e2e;"></div>
<svg style="left:1325px;top:82px;" width="16" height="16" viewBox="0 0 16 16"><path d="M0 2h11v5.800" fill="none" stroke="#fff" stroke-width="2"/><path d="M0 5.500h7.500v2.400" fill="none" stroke="#fff" stroke-width="1"/><rect x="0" y="12.300" width="2" height="1.900" fill="#fff"/><rect x="3.300" y="12.300" width="2" height="1.900" fill="#fff"/><path d="M6.500 12.300h3V10.400l2.700 2.850-2.700 2.850v-1.900h-3z" fill="#fff"/></svg>
<svg style="left:1366px;top:82px;" width="16" height="16" viewBox="0 0 16 16"><path d="M0 2h5.500a5.500 5.500 0 0 1 5.500 5.500v.5" fill="none" stroke="#fff" stroke-width="2"/><path d="M0 5.500h4.500a3 3 0 0 1 3 3v.2" fill="none" stroke="#fff" stroke-width="1"/><rect x="0" y="12.300" width="2" height="1.900" fill="#fff"/><rect x="3.300" y="12.300" width="2" height="1.900" fill="#fff"/><path d="M6.500 12.300h3V10.400l2.700 2.850-2.700 2.850v-1.900h-3z" fill="#fff"/></svg>
<svg style="left:1407px;top:82px;" width="16" height="16" viewBox="0 0 16 16"><defs><linearGradient id="gb1"><stop offset="0" stop-color="#1a9df0"/><stop offset="1" stop-color="#ffffff"/></linearGradient></defs><path d="M0 1.500h11.500v6.500" fill="none" stroke="#fff" stroke-width="1"/><rect x="0" y="3" width="10" height="4.300" fill="url(#gb1)"/><path d="M0 8.500h8v1.800" fill="none" stroke="#fff" stroke-width="1"/><rect x="0" y="12.300" width="2" height="1.900" fill="#fff"/><rect x="3.300" y="12.300" width="2" height="1.900" fill="#fff"/><path d="M6.500 12.300h3V10.400l2.700 2.850-2.700 2.850v-1.900h-3z" fill="#fff"/></svg>
<svg style="left:1448px;top:82px;" width="16" height="16" viewBox="0 0 16 16"><path d="M0 1.500h11.500v6.500" fill="none" stroke="#fff" stroke-width="1"/><path d="M0.600 3l2.400 2.100-2.400 2.100M3.600 3l2.400 2.100-2.400 2.100M6.600 3l2.400 2.100-2.400 2.100" fill="none" stroke="#2aa5f5" stroke-width="0.900"/><path d="M0 8.500h8v1.800" fill="none" stroke="#fff" stroke-width="1"/><rect x="0" y="12.300" width="2" height="1.900" fill="#fff"/><rect x="3.300" y="12.300" width="2" height="1.900" fill="#fff"/><path d="M6.500 12.300h3V10.400l2.700 2.850-2.700 2.850v-1.900h-3z" fill="#fff"/></svg>
<svg style="left:1844px;top:80px;" width="20" height="20" viewBox="0 0 20 20"><path d="M8 3.100h1.400a6.900 6.900 0 0 1 0 13.800H8" fill="none" stroke="#f2f2f2" stroke-width="3.300" /><circle cx="5.400" cy="3.600" r="1.500" fill="#14a014"/><circle cx="5.400" cy="16.600" r="1.500" fill="#14a014"/><path d="M5.300 7.200l-2.600 1.500 2.200 2.200-2.600 1.500" fill="none" stroke="#e8e8e8" stroke-width="1.400"/></svg>
<svg style="left:1888px;top:127px;" width="17" height="17" viewBox="0 0 17 17"><path d="M1 3.800h7l3.500 3.500v8.200H1z" fill="none" stroke="#f2f2f2" stroke-width="1.800"/><path d="M7.500 4v3.800h3.800" fill="none" stroke="#f2f2f2" stroke-width="1.300"/><path d="M13.200 0.500l.8 1.900 2 .2-1.500 1.400.4 2-1.700-1-1.700 1 .4-2L10.400 2.600l2-.2z" fill="#14a014"/></svg>
<svg style="left:1887.5px;top:165px;" width="17" height="15" viewBox="0 0 17 15"><path d="M0.700 0.200h5.800v2.500h8v3.800H3.200L0.700 12.500z" fill="#f2f2f2"/><path d="M3.600 7.400h13l-1.700 6.100H0.700z" fill="#f2f2f2"/></svg>
<svg style="left:1888.5px;top:200.5px;" width="16" height="17" viewBox="0 0 16 17"><rect x="7.050" y="0.700" width="1.500" height="5" fill="#14a014"/><path d="M4.200 4.600h7.200L7.800 8.600z" fill="#14a014"/><path d="M2.700 8.400h2.600l-1.300 3.600h7.600l-1.300-3.600h2.600l1.800 3.600v4.600H0.550v-4.600z" fill="#f2f2f2"/><rect x="4.900" y="12.600" width="5.400" height="1.500" fill="#353535"/></svg>
<svg style="left:1888.5px;top:238px;" width="16" height="14" viewBox="0 0 16 14"><rect x="3.300" y="0.300" width="8.800" height="2.400" fill="#dcdcdc"/><path d="M1.500 4h12.400c.8 0 1.500.7 1.500 1.500v5h-3V8H3.300v2.500h-3v-5C.3 4.700.7 4 1.500 4z" fill="#c4c4c4"/><rect x="3.300" y="9.200" width="8.800" height="4.600" fill="#f2f2f2"/></svg>
<div style="left:1878px;top:266px;width:35px;height:1px;background:#2c2c2c;"></div>
<svg style="left:1888.5px;top:279px;" width="16" height="16" viewBox="0 0 16 16"><path d="M2.800 5V0.900h7l3.800 3.800v9.800H2.800v-3.500" fill="none" stroke="#f2f2f2" stroke-width="2"/><path d="M9.500 1.200v3.800h3.800" fill="none" stroke="#f2f2f2" stroke-width="1.200"/><path d="M0 7.100h5V5l3.800 3.100L5 11.200V9.100H0z" fill="#14a014"/></svg>
<svg style="left:1887.5px;top:316px;" width="17" height="16" viewBox="0 0 17 16"><path d="M10.500 6V4.500L7 0.900H0.900v13.600h9.600V13" fill="none" stroke="#f2f2f2" stroke-width="2"/><path d="M6.800 1.200v3.700h3.700" fill="none" stroke="#f2f2f2" stroke-width="1.200"/><path d="M7.500 8.500h5V6.400l4 3.100-4 3.100v-2.100h-5z" fill="#14a014"/></svg>
<div style="left:1878px;top:344px;width:35px;height:1px;background:#2c2c2c;"></div>
<svg style="left:1888.5px;top:358.5px;" width="15" height="13" viewBox="0 0 15 13"><path d="M4.500 4.300h5a3.300 3.300 0 0 1 0 6.600H7.800" fill="none" stroke="#f2f2f2" stroke-width="2"/><path d="M0.300 4.300l5.200-4v8z" fill="#f2f2f2"/></svg>
<svg style="left:1889.5px;top:395.5px;" width="15" height="13" viewBox="0 0 15 13"><path d="M10.500 4.300h-5a3.300 3.300 0 0 0-3.300 3.300v3.500" fill="none" stroke="#7a7a7a" stroke-width="2"/><path d="M14.200 4.300l-5.200-4v8z" fill="#7a7a7a"/></svg>
<div style="left:1878px;top:422px;width:35px;height:1px;background:#2c2c2c;"></div>
<svg style="left:1887.5px;top:435px;" width="17" height="17" viewBox="0 0 17 17"><rect x="0.500" y="0.500" width="10.500" height="10.500" fill="#f2f2f2"/><rect x="5" y="5" width="12" height="11.500" fill="#353535"/><rect x="6" y="6" width="10.500" height="10.200" fill="#f2f2f2"/></svg>
<svg style="left:1888px;top:472.5px;" width="16" height="16" viewBox="0 0 16 16"><path d="M2.800 0.300l7.800 10.500M13.200 0.300L5.400 10.800" stroke="#f2f2f2" stroke-width="1.700" fill="none"/><circle cx="3.300" cy="12.400" r="2.300" fill="none" stroke="#f2f2f2" stroke-width="1.600"/><circle cx="12.700" cy="12.400" r="2.300" fill="none" stroke="#f2f2f2" stroke-width="1.600"/></svg>
<svg style="left:1888px;top:510px;" width="15" height="16" viewBox="0 0 15 16"><path d="M3.500 2.300H0.600v12.500h13.200V2.300H11" fill="none" stroke="#f2f2f2" stroke-width="1.200"/><rect x="4.500" y="0.300" width="5.500" height="2.800" fill="#f2f2f2"/><path d="M3.300 4h7.800v6.500l-2.500 2.500H3.300z" fill="#e4e4e4"/></svg>
<div style="left:1878px;top:537px;width:35px;height:1px;background:#2c2c2c;"></div>
<svg style="left:1888px;top:549.5px;" width="17" height="17" viewBox="0 0 17 17"><circle cx="6.800" cy="7" r="6.600" fill="#eeeeee"/><path d="M11 11.200l3.300 3.300" stroke="#eeeeee" stroke-width="3" stroke-linecap="round"/><rect x="3.200" y="3.400" width="7.200" height="7.200" fill="none" stroke="#353535" stroke-width="1.300" stroke-dasharray="1.100 0.900"/></svg>
<svg style="left:1888px;top:587px;" width="17" height="17" viewBox="0 0 17 17"><circle cx="6.800" cy="7" r="6.600" fill="#eeeeee"/><path d="M11 11.200l3.300 3.300" stroke="#eeeeee" stroke-width="3" stroke-linecap="round"/><circle cx="6" cy="6" r="2.800" fill="#353535"/><rect x="6.500" y="6.500" width="5" height="5" fill="#353535" stroke="#eeeeee" stroke-width="0.800"/></svg>
<svg style="left:1888px;top:624px;" width="17" height="17" viewBox="0 0 17 17"><circle cx="6.800" cy="7" r="6.600" fill="#eeeeee"/><path d="M11 11.200l3.300 3.300" stroke="#eeeeee" stroke-width="3" stroke-linecap="round"/><rect x="4.300" y="2.700" width="5.800" height="9" fill="none" stroke="#353535" stroke-width="1.200"/></svg>
<svg style="left:1888.5px;top:660.5px;" width="16" height="16" viewBox="0 0 16 16"><rect x="2.800" y="2.800" width="10.400" height="10.400" fill="none" stroke="#f2f2f2" stroke-width="1.100"/><path d="M8 5.300v5.400M5.300 8h5.400" stroke="#f2f2f2" stroke-width="1.200"/><path d="M0.400 3V0.400H3M13 0.400h2.600V3M15.600 13v2.600H13M3 15.600H0.400V13" fill="none" stroke="#9a9a9a" stroke-width="0.800"/></svg>
<div style="left:1878px;top:689px;width:35px;height:1px;background:#2c2c2c;"></div>
<div style="left:1878.5px;top:693px;width:34.5px;height:33.5px;background:#303030;border:1px solid #1b1b1b;border-radius:5px;"></div>
<svg style="left:1890px;top:707.5px;" width="13" height="6.5" viewBox="0 0 13 6.5"><path d="M0 0h13l-6.500 6.500z" fill="#eeeeec"/></svg>
</body></html>
